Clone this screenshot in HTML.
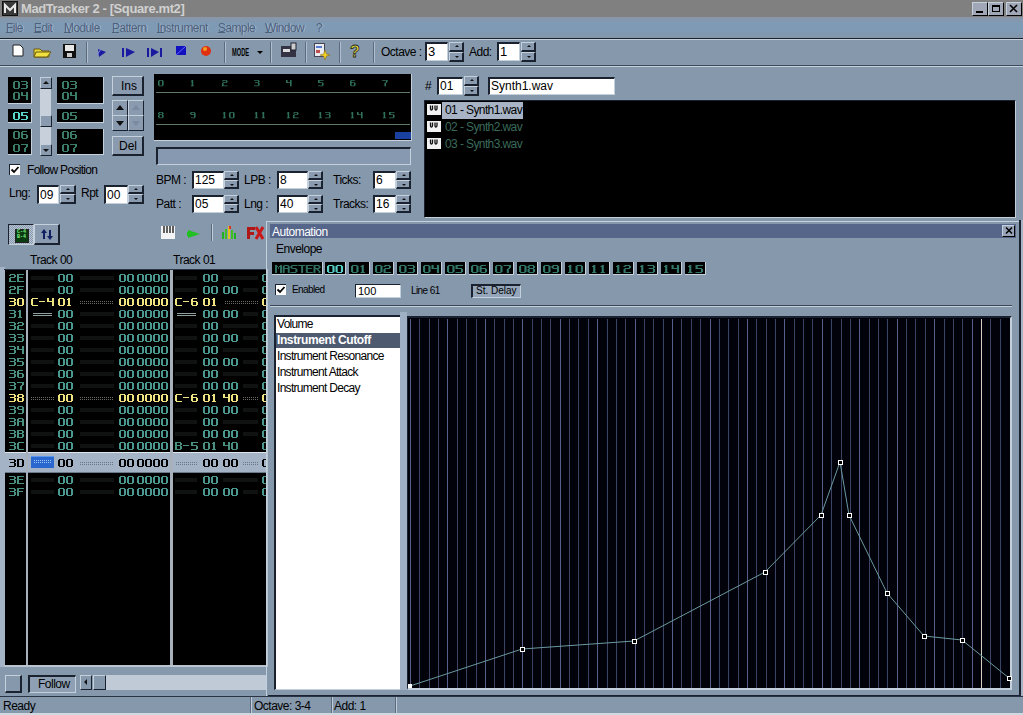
<!DOCTYPE html>
<html><head><meta charset="utf-8"><style>
html,body{margin:0;padding:0;width:1023px;height:715px;overflow:hidden;background:#8698ac;font-family:"Liberation Sans",sans-serif}
.a{position:absolute}
.t{position:absolute;white-space:pre;font-family:"Liberation Sans",sans-serif}
</style></head><body>
<svg width="0" height="0" style="position:absolute"><defs><path id="g0" d="M1 0h5v1h-5zM0 1h2v1h-2zM5 1h2v1h-2zM0 2h2v1h-2zM5 2h2v1h-2zM0 3h2v1h-2zM5 3h2v1h-2zM0 4h2v1h-2zM5 4h2v1h-2zM0 5h2v1h-2zM5 5h2v1h-2zM0 6h2v1h-2zM5 6h2v1h-2zM1 7h5v1h-5z"/><path id="g1" d="M2 0h2v1h-2zM1 1h3v1h-3zM2 2h2v1h-2zM2 3h2v1h-2zM2 4h2v1h-2zM2 5h2v1h-2zM2 6h2v1h-2zM1 7h4v1h-4z"/><path id="g2" d="M1 0h5v1h-5zM0 1h2v1h-2zM5 1h2v1h-2zM5 2h2v1h-2zM1 3h5v1h-5zM0 4h2v1h-2zM0 5h2v1h-2zM0 6h2v1h-2zM0 7h7v1h-7z"/><path id="g3" d="M0 0h6v1h-6zM5 1h2v1h-2zM5 2h2v1h-2zM1 3h5v1h-5zM5 4h2v1h-2zM5 5h2v1h-2zM5 6h2v1h-2zM0 7h6v1h-6z"/><path id="g4" d="M0 0h2v1h-2zM5 0h2v1h-2zM0 1h2v1h-2zM5 1h2v1h-2zM0 2h2v1h-2zM5 2h2v1h-2zM0 3h7v1h-7zM5 4h2v1h-2zM5 5h2v1h-2zM5 6h2v1h-2zM5 7h2v1h-2z"/><path id="g5" d="M0 0h7v1h-7zM0 1h2v1h-2zM0 2h2v1h-2zM0 3h6v1h-6zM5 4h2v1h-2zM5 5h2v1h-2zM5 6h2v1h-2zM0 7h6v1h-6z"/><path id="g6" d="M1 0h5v1h-5zM0 1h2v1h-2zM0 2h2v1h-2zM0 3h6v1h-6zM0 4h2v1h-2zM5 4h2v1h-2zM0 5h2v1h-2zM5 5h2v1h-2zM0 6h2v1h-2zM5 6h2v1h-2zM1 7h5v1h-5z"/><path id="g7" d="M0 0h7v1h-7zM5 1h2v1h-2zM5 2h2v1h-2zM4 3h2v1h-2zM3 4h2v1h-2zM3 5h2v1h-2zM3 6h2v1h-2zM3 7h2v1h-2z"/><path id="g8" d="M1 0h5v1h-5zM0 1h2v1h-2zM5 1h2v1h-2zM0 2h2v1h-2zM5 2h2v1h-2zM1 3h5v1h-5zM0 4h2v1h-2zM5 4h2v1h-2zM0 5h2v1h-2zM5 5h2v1h-2zM0 6h2v1h-2zM5 6h2v1h-2zM1 7h5v1h-5z"/><path id="g9" d="M1 0h5v1h-5zM0 1h2v1h-2zM5 1h2v1h-2zM0 2h2v1h-2zM5 2h2v1h-2zM1 3h6v1h-6zM5 4h2v1h-2zM5 5h2v1h-2zM5 6h2v1h-2zM1 7h5v1h-5z"/><path id="gA" d="M1 0h5v1h-5zM0 1h2v1h-2zM5 1h2v1h-2zM0 2h2v1h-2zM5 2h2v1h-2zM0 3h7v1h-7zM0 4h2v1h-2zM5 4h2v1h-2zM0 5h2v1h-2zM5 5h2v1h-2zM0 6h2v1h-2zM5 6h2v1h-2zM0 7h2v1h-2zM5 7h2v1h-2z"/><path id="gB" d="M0 0h6v1h-6zM0 1h2v1h-2zM5 1h2v1h-2zM0 2h2v1h-2zM5 2h2v1h-2zM0 3h6v1h-6zM0 4h2v1h-2zM5 4h2v1h-2zM0 5h2v1h-2zM5 5h2v1h-2zM0 6h2v1h-2zM5 6h2v1h-2zM0 7h6v1h-6z"/><path id="gC" d="M1 0h6v1h-6zM0 1h2v1h-2zM0 2h2v1h-2zM0 3h2v1h-2zM0 4h2v1h-2zM0 5h2v1h-2zM0 6h2v1h-2zM1 7h6v1h-6z"/><path id="gD" d="M0 0h6v1h-6zM0 1h2v1h-2zM5 1h2v1h-2zM0 2h2v1h-2zM5 2h2v1h-2zM0 3h2v1h-2zM5 3h2v1h-2zM0 4h2v1h-2zM5 4h2v1h-2zM0 5h2v1h-2zM5 5h2v1h-2zM0 6h2v1h-2zM5 6h2v1h-2zM0 7h6v1h-6z"/><path id="gE" d="M0 0h7v1h-7zM0 1h2v1h-2zM0 2h2v1h-2zM0 3h6v1h-6zM0 4h2v1h-2zM0 5h2v1h-2zM0 6h2v1h-2zM0 7h7v1h-7z"/><path id="gF" d="M0 0h7v1h-7zM0 1h2v1h-2zM0 2h2v1h-2zM0 3h6v1h-6zM0 4h2v1h-2zM0 5h2v1h-2zM0 6h2v1h-2zM0 7h2v1h-2z"/><path id="gdash" d="M0 3h6v1h-6z"/><path id="gM" d="M0 0h2v1h-2zM5 0h2v1h-2zM0 1h3v1h-3zM4 1h3v1h-3zM0 2h2v1h-2zM3 2h1v1h-1zM5 2h2v1h-2zM0 3h2v1h-2zM3 3h1v1h-1zM5 3h2v1h-2zM0 4h2v1h-2zM5 4h2v1h-2zM0 5h2v1h-2zM5 5h2v1h-2zM0 6h2v1h-2zM5 6h2v1h-2zM0 7h2v1h-2zM5 7h2v1h-2z"/><path id="gS" d="M1 0h6v1h-6zM0 1h2v1h-2zM0 2h2v1h-2zM1 3h5v1h-5zM5 4h2v1h-2zM5 5h2v1h-2zM5 6h2v1h-2zM0 7h6v1h-6z"/><path id="gT" d="M0 0h7v1h-7zM3 1h2v1h-2zM3 2h2v1h-2zM3 3h2v1h-2zM3 4h2v1h-2zM3 5h2v1h-2zM3 6h2v1h-2zM3 7h2v1h-2z"/><path id="gR" d="M0 0h6v1h-6zM0 1h2v1h-2zM5 1h2v1h-2zM0 2h2v1h-2zM5 2h2v1h-2zM0 3h6v1h-6zM0 4h2v1h-2zM3 4h2v1h-2zM0 5h2v1h-2zM4 5h2v1h-2zM0 6h2v1h-2zM5 6h2v1h-2zM0 7h2v1h-2zM5 7h2v1h-2z"/></defs></svg>
<div class="a" style="left:0px;top:0px;width:1023px;height:17px;background:#808080"></div>
<div class="a" style="left:2px;top:1px;width:16px;height:15px;background:#3a3a3a;border:1px solid #111;box-sizing:border-box"><svg width="14" height="13" style="position:absolute;left:0;top:0"><path d="M2 11 L2 3 L7 8 L12 3 L12 11" stroke="#e8e8e8" stroke-width="2" fill="none"/></svg></div>
<div class="t" style="left:21px;top:1px;font-size:13px;font-weight:bold;color:#d0d0d0;line-height:15px;letter-spacing:-0.4px">MadTracker 2 - [Square.mt2]</div>
<div class="a" style="left:972px;top:2px;width:16px;height:14px;background:#a0a8b8;box-sizing:border-box;border-top:1px solid #c4d0dc;border-left:1px solid #c4d0dc;border-bottom:1px solid #1a2230;border-right:1px solid #1a2230;border-bottom:1px solid #000;border-right:1px solid #000"></div>
<div class="a" style="left:988px;top:2px;width:16px;height:14px;background:#a0a8b8;box-sizing:border-box;border-top:1px solid #c4d0dc;border-left:1px solid #c4d0dc;border-bottom:1px solid #1a2230;border-right:1px solid #1a2230;border-bottom:1px solid #000;border-right:1px solid #000"></div>
<div class="a" style="left:1006px;top:2px;width:16px;height:14px;background:#a0a8b8;box-sizing:border-box;border-top:1px solid #c4d0dc;border-left:1px solid #c4d0dc;border-bottom:1px solid #1a2230;border-right:1px solid #1a2230;border-bottom:1px solid #000;border-right:1px solid #000"></div>
<div class="a" style="left:976px;top:11px;width:7px;height:2px;background:#000"></div>
<div class="a" style="left:992px;top:5px;width:8px;height:7px;border:1px solid #000;border-top:2px solid #000;box-sizing:border-box"></div>
<svg class="a" style="left:1009px;top:4px" width="10" height="10"><path d="M1 1 L8 8 M8 1 L1 8" stroke="#000" stroke-width="1.6"/></svg>
<div class="a" style="left:0px;top:17px;width:1023px;height:21px;background:linear-gradient(#8a96a6 0px,#8498ae 3px,#7e9ab4 6px,#7e9ab4 14px,#8496aa 21px)"></div>
<div class="t" style="left:7px;top:21px;font-size:12px;color:#a8bcd0;letter-spacing:-0.6px;line-height:14px">File</div>
<div class="t" style="left:6px;top:21px;font-size:12px;color:#4e607c;letter-spacing:-0.6px;line-height:14px">File</div>
<div class="a" style="left:6px;top:32px;width:7px;height:1px;background:#4e607c"></div>
<div class="t" style="left:35px;top:21px;font-size:12px;color:#a8bcd0;letter-spacing:-0.6px;line-height:14px">Edit</div>
<div class="t" style="left:34px;top:21px;font-size:12px;color:#4e607c;letter-spacing:-0.6px;line-height:14px">Edit</div>
<div class="a" style="left:34px;top:32px;width:7px;height:1px;background:#4e607c"></div>
<div class="t" style="left:65px;top:21px;font-size:12px;color:#a8bcd0;letter-spacing:-0.6px;line-height:14px">Module</div>
<div class="t" style="left:64px;top:21px;font-size:12px;color:#4e607c;letter-spacing:-0.6px;line-height:14px">Module</div>
<div class="a" style="left:64px;top:32px;width:7px;height:1px;background:#4e607c"></div>
<div class="t" style="left:113px;top:21px;font-size:12px;color:#a8bcd0;letter-spacing:-0.6px;line-height:14px">Pattern</div>
<div class="t" style="left:112px;top:21px;font-size:12px;color:#4e607c;letter-spacing:-0.6px;line-height:14px">Pattern</div>
<div class="a" style="left:112px;top:32px;width:7px;height:1px;background:#4e607c"></div>
<div class="t" style="left:158px;top:21px;font-size:12px;color:#a8bcd0;letter-spacing:-0.6px;line-height:14px">Instrument</div>
<div class="t" style="left:157px;top:21px;font-size:12px;color:#4e607c;letter-spacing:-0.6px;line-height:14px">Instrument</div>
<div class="a" style="left:157px;top:32px;width:7px;height:1px;background:#4e607c"></div>
<div class="t" style="left:219px;top:21px;font-size:12px;color:#a8bcd0;letter-spacing:-0.6px;line-height:14px">Sample</div>
<div class="t" style="left:218px;top:21px;font-size:12px;color:#4e607c;letter-spacing:-0.6px;line-height:14px">Sample</div>
<div class="a" style="left:218px;top:32px;width:7px;height:1px;background:#4e607c"></div>
<div class="t" style="left:266px;top:21px;font-size:12px;color:#a8bcd0;letter-spacing:-0.6px;line-height:14px">Window</div>
<div class="t" style="left:265px;top:21px;font-size:12px;color:#4e607c;letter-spacing:-0.6px;line-height:14px">Window</div>
<div class="a" style="left:265px;top:32px;width:7px;height:1px;background:#4e607c"></div>
<div class="t" style="left:317px;top:21px;font-size:12px;color:#a8bcd0;letter-spacing:-0.6px;line-height:14px">?</div>
<div class="t" style="left:316px;top:21px;font-size:12px;color:#4e607c;letter-spacing:-0.6px;line-height:14px">?</div>
<div class="a" style="left:0px;top:38px;width:1023px;height:1px;background:#1a2230"></div>
<div class="a" style="left:0px;top:39px;width:1023px;height:1px;background:#c4d0dc"></div>
<div class="a" style="left:0px;top:40px;width:1023px;height:25px;background:#8698ac"></div>
<div class="a" style="left:0px;top:65px;width:1023px;height:1px;background:#3c4a5c"></div>
<div class="a" style="left:0px;top:66px;width:1023px;height:1px;background:#c4d0dc"></div>
<div class="a" style="left:86px;top:42px;width:1px;height:21px;background:#5a6a80"></div>
<div class="a" style="left:87px;top:42px;width:1px;height:21px;background:#b0bece"></div>
<div class="a" style="left:224px;top:42px;width:1px;height:21px;background:#5a6a80"></div>
<div class="a" style="left:225px;top:42px;width:1px;height:21px;background:#b0bece"></div>
<div class="a" style="left:270px;top:42px;width:1px;height:21px;background:#5a6a80"></div>
<div class="a" style="left:271px;top:42px;width:1px;height:21px;background:#b0bece"></div>
<div class="a" style="left:305px;top:42px;width:1px;height:21px;background:#5a6a80"></div>
<div class="a" style="left:306px;top:42px;width:1px;height:21px;background:#b0bece"></div>
<div class="a" style="left:339px;top:42px;width:1px;height:21px;background:#5a6a80"></div>
<div class="a" style="left:340px;top:42px;width:1px;height:21px;background:#b0bece"></div>
<div class="a" style="left:373px;top:42px;width:1px;height:21px;background:#5a6a80"></div>
<div class="a" style="left:374px;top:42px;width:1px;height:21px;background:#b0bece"></div>
<svg class="a" style="left:0;top:40px" width="380" height="25">
<path d="M13 5 H20 L23 8 V16 H13 Z" fill="#fff" stroke="#222" stroke-width="1"/>
<path d="M34 9 H40 L42 11 H49 V17 H34 Z" fill="#e8d838" stroke="#6a5a10" stroke-width="1"/>
<path d="M36 12 H51 L47 17 H34 Z" fill="#f0e040" stroke="#6a5a10" stroke-width="1"/>
<rect x="63" y="4" width="13" height="14" fill="#111"/><rect x="65" y="5" width="9" height="6" fill="#e8e8e8"/><rect x="67" y="13" width="5" height="4" fill="#ccc"/>
<path d="M98 9 L106 12 L99 17 Z" fill="#1a1aa0"/><path d="M97 15 L101 9" stroke="#8a8ae0" stroke-width="1"/>
<rect x="122" y="8" width="2" height="9" fill="#1a1aa0"/><path d="M126 8 L135 12 L126 17 Z" fill="#1a1aa0"/>
<rect x="147" y="8" width="2" height="9" fill="#1a1aa0"/><path d="M151 8 L159 12 L151 17 Z" fill="#1a1aa0"/><rect x="160" y="8" width="2" height="9" fill="#1a1aa0"/>
<path d="M176 6 H186 V15 H176 Z" fill="#1010c0"/><path d="M176 15 L186 6" stroke="#6a6af0" stroke-width="1"/>
<circle cx="206" cy="11" r="5" fill="#e03010"/><circle cx="205" cy="9" r="2" fill="#f0a020"/>
<text x="232" y="16" font-family="Liberation Sans" font-weight="bold" font-size="10" fill="#000" textLength="17" lengthAdjust="spacingAndGlyphs">MODE</text>
<path d="M257 11 H263 L260 14 Z" fill="#000"/>
<rect x="281" y="6" width="15" height="11" fill="#334" /><rect x="283" y="9" width="7" height="3" fill="#ddd"/><rect x="291" y="3" width="5" height="7" fill="#ccc" stroke="#223" stroke-width="1"/>
<rect x="314.5" y="3.5" width="10" height="13" fill="#e8ecf0" stroke="#445" stroke-width="1"/><rect x="316" y="6" width="6" height="2" fill="#5a7ad0"/><rect x="316" y="10" width="4" height="3" fill="#c05050"/><path d="M325 10 L326.5 14 L330 15 L326.5 16 L325 20 L323.5 16 L320 15 L323.5 14 Z" fill="#f0d020" stroke="#806010" stroke-width="0.5"/>
<text x="350" y="17" font-family="Liberation Sans" font-weight="bold" font-size="16" fill="#f0e838" stroke="#222" stroke-width="0.8">?</text>
</svg>
<div class="t" style="left:381px;top:45px;font-size:12px;color:#000;letter-spacing:-0.5px;line-height:14px">Octave :</div>
<div class="a" style="left:425px;top:42px;width:23px;height:19px;background:#fff;box-sizing:border-box;border-top:2px solid #1a2230;border-left:2px solid #1a2230;border-bottom:1px solid #c4d0dc;border-right:1px solid #c4d0dc;"></div>
<div class="t" style="left:428px;top:44.5px;font-size:13px;color:#000;line-height:14px;">3</div>
<div class="a" style="left:449px;top:42px;width:15px;height:10px;background:#8a9bb0;box-sizing:border-box;border-top:1px solid #c4d0dc;border-left:1px solid #c4d0dc;border-bottom:1px solid #1a2230;border-right:1px solid #1a2230;border-bottom:2px solid #1a2230;border-right:2px solid #1a2230;"></div>
<div class="a" style="left:449px;top:52px;width:15px;height:10px;background:#8a9bb0;box-sizing:border-box;border-top:1px solid #c4d0dc;border-left:1px solid #c4d0dc;border-bottom:1px solid #1a2230;border-right:1px solid #1a2230;border-bottom:2px solid #1a2230;border-right:2px solid #1a2230;"></div>
<div class="a" style="left:454.5px;top:45.0px;width:0;height:0;border-left:2px solid transparent;border-right:2px solid transparent;border-bottom:2px solid #111"></div>
<div class="a" style="left:454.5px;top:56.0px;width:0;height:0;border-left:2px solid transparent;border-right:2px solid transparent;border-top:2px solid #111"></div>
<div class="t" style="left:469px;top:45px;font-size:12px;color:#000;letter-spacing:-0.5px;line-height:14px">Add:</div>
<div class="a" style="left:497px;top:42px;width:23px;height:19px;background:#fff;box-sizing:border-box;border-top:2px solid #1a2230;border-left:2px solid #1a2230;border-bottom:1px solid #c4d0dc;border-right:1px solid #c4d0dc;"></div>
<div class="t" style="left:500px;top:44.5px;font-size:13px;color:#000;line-height:14px;">1</div>
<div class="a" style="left:521px;top:42px;width:15px;height:10px;background:#8a9bb0;box-sizing:border-box;border-top:1px solid #c4d0dc;border-left:1px solid #c4d0dc;border-bottom:1px solid #1a2230;border-right:1px solid #1a2230;border-bottom:2px solid #1a2230;border-right:2px solid #1a2230;"></div>
<div class="a" style="left:521px;top:52px;width:15px;height:10px;background:#8a9bb0;box-sizing:border-box;border-top:1px solid #c4d0dc;border-left:1px solid #c4d0dc;border-bottom:1px solid #1a2230;border-right:1px solid #1a2230;border-bottom:2px solid #1a2230;border-right:2px solid #1a2230;"></div>
<div class="a" style="left:526.5px;top:45.0px;width:0;height:0;border-left:2px solid transparent;border-right:2px solid transparent;border-bottom:2px solid #111"></div>
<div class="a" style="left:526.5px;top:56.0px;width:0;height:0;border-left:2px solid transparent;border-right:2px solid transparent;border-top:2px solid #111"></div>
<div class="a" style="left:0px;top:67px;width:1023px;height:155px;background:#8698ac"></div>
<div class="a" style="left:8px;top:77px;width:24px;height:27px;background:#000;box-sizing:border-box;border-bottom:1px solid #c4d0dc;border-right:1px solid #c4d0dc;"></div>
<svg class="a" style="left:8px;top:77px" width="23" height="26"><use href="#g0" x="5" y="4" fill="#3a7c68"/><use href="#g3" x="13" y="4" fill="#3a7c68"/><use href="#g0" x="5" y="15" fill="#3a7c68"/><use href="#g4" x="13" y="15" fill="#3a7c68"/></svg>
<div class="a" style="left:8px;top:109px;width:24px;height:14px;background:#000;box-sizing:border-box;border-bottom:1px solid #c4d0dc;border-right:1px solid #c4d0dc;"></div>
<svg class="a" style="left:8px;top:109px" width="23" height="13"><use href="#g0" x="5" y="3" fill="#58d8c8"/><use href="#g5" x="13" y="3" fill="#58d8c8"/></svg>
<div class="a" style="left:8px;top:129px;width:24px;height:26px;background:#000;box-sizing:border-box;border-bottom:1px solid #c4d0dc;border-right:1px solid #c4d0dc;"></div>
<svg class="a" style="left:8px;top:129px" width="23" height="25"><use href="#g0" x="5" y="2" fill="#3a7c68"/><use href="#g6" x="13" y="2" fill="#3a7c68"/><use href="#g0" x="5" y="15" fill="#3a7c68"/><use href="#g7" x="13" y="15" fill="#3a7c68"/></svg>
<div class="a" style="left:57px;top:77px;width:47px;height:27px;background:#000;box-sizing:border-box;border-bottom:1px solid #c4d0dc;border-right:1px solid #c4d0dc;"></div>
<svg class="a" style="left:57px;top:77px" width="46" height="26"><use href="#g0" x="5" y="4" fill="#3a7c68"/><use href="#g3" x="13" y="4" fill="#3a7c68"/><use href="#g0" x="5" y="15" fill="#3a7c68"/><use href="#g4" x="13" y="15" fill="#3a7c68"/></svg>
<div class="a" style="left:57px;top:109px;width:47px;height:14px;background:#000;box-sizing:border-box;border-bottom:1px solid #c4d0dc;border-right:1px solid #c4d0dc;"></div>
<svg class="a" style="left:57px;top:109px" width="46" height="13"><use href="#g0" x="5" y="3" fill="#3a7c68"/><use href="#g5" x="13" y="3" fill="#3a7c68"/></svg>
<div class="a" style="left:57px;top:129px;width:47px;height:26px;background:#000;box-sizing:border-box;border-bottom:1px solid #c4d0dc;border-right:1px solid #c4d0dc;"></div>
<svg class="a" style="left:57px;top:129px" width="46" height="25"><use href="#g0" x="5" y="2" fill="#3a7c68"/><use href="#g6" x="13" y="2" fill="#3a7c68"/><use href="#g0" x="5" y="15" fill="#3a7c68"/><use href="#g7" x="13" y="15" fill="#3a7c68"/></svg>
<div class="a" style="left:40px;top:77px;width:11px;height:78px;background:#c8d0dc"></div>
<div class="a" style="left:40px;top:77px;width:12px;height:12px;background:#8a9bb0;box-sizing:border-box;border-top:1px solid #c4d0dc;border-left:1px solid #c4d0dc;border-bottom:1px solid #1a2230;border-right:1px solid #1a2230;"></div>
<div class="a" style="left:40px;top:115px;width:12px;height:12px;background:#8a9bb0;box-sizing:border-box;border-top:1px solid #c4d0dc;border-left:1px solid #c4d0dc;border-bottom:1px solid #1a2230;border-right:1px solid #1a2230;"></div>
<div class="a" style="left:40px;top:144px;width:12px;height:12px;background:#8a9bb0;box-sizing:border-box;border-top:1px solid #c4d0dc;border-left:1px solid #c4d0dc;border-bottom:1px solid #1a2230;border-right:1px solid #1a2230;"></div>
<div class="a" style="left:43px;top:81px;width:0;height:0;border-left:3px solid transparent;border-right:3px solid transparent;border-bottom:3px solid #111"></div>
<div class="a" style="left:43px;top:149px;width:0;height:0;border-left:3px solid transparent;border-right:3px solid transparent;border-top:3px solid #111"></div>
<div class="a" style="left:112px;top:76px;width:32px;height:20px;background:#8a9bb0;box-sizing:border-box;border-top:1px solid #c4d0dc;border-left:1px solid #c4d0dc;border-bottom:1px solid #1a2230;border-right:1px solid #1a2230;border-bottom:2px solid #1a2230;border-right:2px solid #1a2230"></div>
<div class="t" style="left:121px;top:79px;font-size:12px;color:#000;line-height:14px">Ins</div>
<div class="a" style="left:112px;top:136px;width:32px;height:20px;background:#8a9bb0;box-sizing:border-box;border-top:1px solid #c4d0dc;border-left:1px solid #c4d0dc;border-bottom:1px solid #1a2230;border-right:1px solid #1a2230;border-bottom:2px solid #1a2230;border-right:2px solid #1a2230"></div>
<div class="t" style="left:119px;top:139px;font-size:12px;color:#000;line-height:14px">Del</div>
<div class="a" style="left:112px;top:100px;width:16px;height:16px;background:#8a9bb0;box-sizing:border-box;border-top:1px solid #c4d0dc;border-left:1px solid #c4d0dc;border-bottom:1px solid #1a2230;border-right:1px solid #1a2230;"></div>
<div class="a" style="left:116px;top:105px;width:0;height:0;border-left:4px solid transparent;border-right:4px solid transparent;border-bottom:5px solid #111"></div>
<div class="a" style="left:128px;top:100px;width:16px;height:16px;background:#8a9bb0;box-sizing:border-box;border-top:1px solid #c4d0dc;border-left:1px solid #c4d0dc;border-bottom:1px solid #1a2230;border-right:1px solid #1a2230;"></div>
<div class="a" style="left:132px;top:105px;width:0;height:0;border-left:4px solid transparent;border-right:4px solid transparent;border-bottom:5px solid #7a8aa0"></div>
<div class="a" style="left:112px;top:115px;width:16px;height:16px;background:#8a9bb0;box-sizing:border-box;border-top:1px solid #c4d0dc;border-left:1px solid #c4d0dc;border-bottom:1px solid #1a2230;border-right:1px solid #1a2230;"></div>
<div class="a" style="left:116px;top:121px;width:0;height:0;border-left:4px solid transparent;border-right:4px solid transparent;border-top:5px solid #111"></div>
<div class="a" style="left:128px;top:115px;width:16px;height:16px;background:#8a9bb0;box-sizing:border-box;border-top:1px solid #c4d0dc;border-left:1px solid #c4d0dc;border-bottom:1px solid #1a2230;border-right:1px solid #1a2230;"></div>
<div class="a" style="left:132px;top:121px;width:0;height:0;border-left:4px solid transparent;border-right:4px solid transparent;border-top:5px solid #7a8aa0"></div>
<div class="a" style="left:9px;top:164px;width:11px;height:11px;background:#fff;box-sizing:border-box;border-top:1px solid #1a2230;border-left:1px solid #1a2230"></div>
<svg class="a" style="left:10px;top:165px" width="10" height="10"><path d="M1.5 4.5 L4 7 L8.5 2" stroke="#000" stroke-width="1.8" fill="none"/></svg>
<div class="t" style="left:27px;top:163px;font-size:12px;color:#000;letter-spacing:-0.7px;line-height:14px">Follow Position</div>
<div class="t" style="left:9px;top:186px;font-size:12px;color:#000;letter-spacing:-0.5px;line-height:14px">Lng:</div>
<div class="a" style="left:37px;top:185px;width:22px;height:19px;background:#fff;box-sizing:border-box;border-top:2px solid #1a2230;border-left:2px solid #1a2230;border-bottom:1px solid #c4d0dc;border-right:1px solid #c4d0dc;"></div>
<div class="t" style="left:40px;top:187.5px;font-size:12px;color:#000;line-height:14px;">09</div>
<div class="a" style="left:60px;top:185px;width:16px;height:9px;background:#8a9bb0;box-sizing:border-box;border-top:1px solid #c4d0dc;border-left:1px solid #c4d0dc;border-bottom:1px solid #1a2230;border-right:1px solid #1a2230;border-bottom:2px solid #1a2230;border-right:2px solid #1a2230;"></div>
<div class="a" style="left:60px;top:194px;width:16px;height:10px;background:#8a9bb0;box-sizing:border-box;border-top:1px solid #c4d0dc;border-left:1px solid #c4d0dc;border-bottom:1px solid #1a2230;border-right:1px solid #1a2230;border-bottom:2px solid #1a2230;border-right:2px solid #1a2230;"></div>
<div class="a" style="left:66.0px;top:187.5px;width:0;height:0;border-left:2px solid transparent;border-right:2px solid transparent;border-bottom:2px solid #111"></div>
<div class="a" style="left:66.0px;top:198.0px;width:0;height:0;border-left:2px solid transparent;border-right:2px solid transparent;border-top:2px solid #111"></div>
<div class="t" style="left:81px;top:186px;font-size:12px;color:#000;letter-spacing:-0.5px;line-height:14px">Rpt</div>
<div class="a" style="left:104px;top:185px;width:24px;height:19px;background:#fff;box-sizing:border-box;border-top:2px solid #1a2230;border-left:2px solid #1a2230;border-bottom:1px solid #c4d0dc;border-right:1px solid #c4d0dc;"></div>
<div class="t" style="left:107px;top:187.5px;font-size:12px;color:#000;line-height:14px;">00</div>
<div class="a" style="left:128px;top:185px;width:16px;height:9px;background:#8a9bb0;box-sizing:border-box;border-top:1px solid #c4d0dc;border-left:1px solid #c4d0dc;border-bottom:1px solid #1a2230;border-right:1px solid #1a2230;border-bottom:2px solid #1a2230;border-right:2px solid #1a2230;"></div>
<div class="a" style="left:128px;top:194px;width:16px;height:10px;background:#8a9bb0;box-sizing:border-box;border-top:1px solid #c4d0dc;border-left:1px solid #c4d0dc;border-bottom:1px solid #1a2230;border-right:1px solid #1a2230;border-bottom:2px solid #1a2230;border-right:2px solid #1a2230;"></div>
<div class="a" style="left:134.0px;top:187.5px;width:0;height:0;border-left:2px solid transparent;border-right:2px solid transparent;border-bottom:2px solid #111"></div>
<div class="a" style="left:134.0px;top:198.0px;width:0;height:0;border-left:2px solid transparent;border-right:2px solid transparent;border-top:2px solid #111"></div>
<div class="a" style="left:154px;top:74px;width:258px;height:67px;background:#000;box-sizing:border-box;border-bottom:1px solid #c4d0dc;border-right:1px solid #c4d0dc"></div>
<div class="a" style="left:156px;top:92px;width:254px;height:1px;background:#607a6a"></div>
<div class="a" style="left:156px;top:124px;width:254px;height:1px;background:#607a6a"></div>
<svg class="a" style="left:154px;top:74px" width="257" height="66"><use href="#g0" transform="translate(4 6) scale(0.8 0.78)" fill="#2f7058"/><use href="#g8" transform="translate(4 38) scale(0.8 0.78)" fill="#2f7058"/><use href="#g1" transform="translate(36 6) scale(0.8 0.78)" fill="#2f7058"/><use href="#g9" transform="translate(36 38) scale(0.8 0.78)" fill="#2f7058"/><use href="#g2" transform="translate(68 6) scale(0.8 0.78)" fill="#2f7058"/><use href="#g1" transform="translate(68 38) scale(0.8 0.78)" fill="#2f7058"/><use href="#g0" transform="translate(75 38) scale(0.8 0.78)" fill="#2f7058"/><use href="#g3" transform="translate(100 6) scale(0.8 0.78)" fill="#2f7058"/><use href="#g1" transform="translate(100 38) scale(0.8 0.78)" fill="#2f7058"/><use href="#g1" transform="translate(107 38) scale(0.8 0.78)" fill="#2f7058"/><use href="#g4" transform="translate(132 6) scale(0.8 0.78)" fill="#2f7058"/><use href="#g1" transform="translate(132 38) scale(0.8 0.78)" fill="#2f7058"/><use href="#g2" transform="translate(139 38) scale(0.8 0.78)" fill="#2f7058"/><use href="#g5" transform="translate(164 6) scale(0.8 0.78)" fill="#2f7058"/><use href="#g1" transform="translate(164 38) scale(0.8 0.78)" fill="#2f7058"/><use href="#g3" transform="translate(171 38) scale(0.8 0.78)" fill="#2f7058"/><use href="#g6" transform="translate(196 6) scale(0.8 0.78)" fill="#2f7058"/><use href="#g1" transform="translate(196 38) scale(0.8 0.78)" fill="#2f7058"/><use href="#g4" transform="translate(203 38) scale(0.8 0.78)" fill="#2f7058"/><use href="#g7" transform="translate(228 6) scale(0.8 0.78)" fill="#2f7058"/><use href="#g1" transform="translate(228 38) scale(0.8 0.78)" fill="#2f7058"/><use href="#g5" transform="translate(235 38) scale(0.8 0.78)" fill="#2f7058"/></svg>
<div class="a" style="left:395px;top:132px;width:16px;height:7px;background:#1a40a0"></div>
<div class="a" style="left:156px;top:147px;width:255px;height:18px;background:#8799b0;box-sizing:border-box;border-top:1px solid #1a2230;border-left:1px solid #1a2230;border-bottom:1px solid #c4d0dc;border-right:1px solid #c4d0dc;border-top:2px solid #1a2230;border-left:2px solid #1a2230"></div>
<div class="t" style="left:156px;top:173px;font-size:12px;color:#000;letter-spacing:-0.5px;line-height:14px">BPM :</div>
<div class="a" style="left:192px;top:171px;width:32px;height:18px;background:#fff;box-sizing:border-box;border-top:2px solid #1a2230;border-left:2px solid #1a2230;border-bottom:1px solid #c4d0dc;border-right:1px solid #c4d0dc;"></div>
<div class="t" style="left:195px;top:173.0px;font-size:12px;color:#000;line-height:14px;">125</div>
<div class="a" style="left:224px;top:171px;width:15px;height:9px;background:#8a9bb0;box-sizing:border-box;border-top:1px solid #c4d0dc;border-left:1px solid #c4d0dc;border-bottom:1px solid #1a2230;border-right:1px solid #1a2230;border-bottom:2px solid #1a2230;border-right:2px solid #1a2230;"></div>
<div class="a" style="left:224px;top:180px;width:15px;height:9px;background:#8a9bb0;box-sizing:border-box;border-top:1px solid #c4d0dc;border-left:1px solid #c4d0dc;border-bottom:1px solid #1a2230;border-right:1px solid #1a2230;border-bottom:2px solid #1a2230;border-right:2px solid #1a2230;"></div>
<div class="a" style="left:229.5px;top:173.5px;width:0;height:0;border-left:2px solid transparent;border-right:2px solid transparent;border-bottom:2px solid #111"></div>
<div class="a" style="left:229.5px;top:183.5px;width:0;height:0;border-left:2px solid transparent;border-right:2px solid transparent;border-top:2px solid #111"></div>
<div class="t" style="left:156px;top:197px;font-size:12px;color:#000;letter-spacing:-0.5px;line-height:14px">Patt :</div>
<div class="a" style="left:192px;top:195px;width:32px;height:18px;background:#fff;box-sizing:border-box;border-top:2px solid #1a2230;border-left:2px solid #1a2230;border-bottom:1px solid #c4d0dc;border-right:1px solid #c4d0dc;"></div>
<div class="t" style="left:195px;top:197.0px;font-size:12px;color:#000;line-height:14px;">05</div>
<div class="a" style="left:224px;top:195px;width:15px;height:9px;background:#8a9bb0;box-sizing:border-box;border-top:1px solid #c4d0dc;border-left:1px solid #c4d0dc;border-bottom:1px solid #1a2230;border-right:1px solid #1a2230;border-bottom:2px solid #1a2230;border-right:2px solid #1a2230;"></div>
<div class="a" style="left:224px;top:204px;width:15px;height:9px;background:#8a9bb0;box-sizing:border-box;border-top:1px solid #c4d0dc;border-left:1px solid #c4d0dc;border-bottom:1px solid #1a2230;border-right:1px solid #1a2230;border-bottom:2px solid #1a2230;border-right:2px solid #1a2230;"></div>
<div class="a" style="left:229.5px;top:197.5px;width:0;height:0;border-left:2px solid transparent;border-right:2px solid transparent;border-bottom:2px solid #111"></div>
<div class="a" style="left:229.5px;top:207.5px;width:0;height:0;border-left:2px solid transparent;border-right:2px solid transparent;border-top:2px solid #111"></div>
<div class="t" style="left:244px;top:173px;font-size:12px;color:#000;letter-spacing:-0.5px;line-height:14px">LPB :</div>
<div class="a" style="left:277px;top:171px;width:31px;height:18px;background:#fff;box-sizing:border-box;border-top:2px solid #1a2230;border-left:2px solid #1a2230;border-bottom:1px solid #c4d0dc;border-right:1px solid #c4d0dc;"></div>
<div class="t" style="left:280px;top:173.0px;font-size:12px;color:#000;line-height:14px;">8</div>
<div class="a" style="left:308px;top:171px;width:15px;height:9px;background:#8a9bb0;box-sizing:border-box;border-top:1px solid #c4d0dc;border-left:1px solid #c4d0dc;border-bottom:1px solid #1a2230;border-right:1px solid #1a2230;border-bottom:2px solid #1a2230;border-right:2px solid #1a2230;"></div>
<div class="a" style="left:308px;top:180px;width:15px;height:9px;background:#8a9bb0;box-sizing:border-box;border-top:1px solid #c4d0dc;border-left:1px solid #c4d0dc;border-bottom:1px solid #1a2230;border-right:1px solid #1a2230;border-bottom:2px solid #1a2230;border-right:2px solid #1a2230;"></div>
<div class="a" style="left:313.5px;top:173.5px;width:0;height:0;border-left:2px solid transparent;border-right:2px solid transparent;border-bottom:2px solid #111"></div>
<div class="a" style="left:313.5px;top:183.5px;width:0;height:0;border-left:2px solid transparent;border-right:2px solid transparent;border-top:2px solid #111"></div>
<div class="t" style="left:244px;top:197px;font-size:12px;color:#000;letter-spacing:-0.5px;line-height:14px">Lng :</div>
<div class="a" style="left:277px;top:195px;width:31px;height:18px;background:#fff;box-sizing:border-box;border-top:2px solid #1a2230;border-left:2px solid #1a2230;border-bottom:1px solid #c4d0dc;border-right:1px solid #c4d0dc;"></div>
<div class="t" style="left:280px;top:197.0px;font-size:12px;color:#000;line-height:14px;">40</div>
<div class="a" style="left:308px;top:195px;width:15px;height:9px;background:#8a9bb0;box-sizing:border-box;border-top:1px solid #c4d0dc;border-left:1px solid #c4d0dc;border-bottom:1px solid #1a2230;border-right:1px solid #1a2230;border-bottom:2px solid #1a2230;border-right:2px solid #1a2230;"></div>
<div class="a" style="left:308px;top:204px;width:15px;height:9px;background:#8a9bb0;box-sizing:border-box;border-top:1px solid #c4d0dc;border-left:1px solid #c4d0dc;border-bottom:1px solid #1a2230;border-right:1px solid #1a2230;border-bottom:2px solid #1a2230;border-right:2px solid #1a2230;"></div>
<div class="a" style="left:313.5px;top:197.5px;width:0;height:0;border-left:2px solid transparent;border-right:2px solid transparent;border-bottom:2px solid #111"></div>
<div class="a" style="left:313.5px;top:207.5px;width:0;height:0;border-left:2px solid transparent;border-right:2px solid transparent;border-top:2px solid #111"></div>
<div class="t" style="left:333px;top:173px;font-size:12px;color:#000;letter-spacing:-0.5px;line-height:14px">Ticks:</div>
<div class="a" style="left:373px;top:171px;width:23px;height:18px;background:#fff;box-sizing:border-box;border-top:2px solid #1a2230;border-left:2px solid #1a2230;border-bottom:1px solid #c4d0dc;border-right:1px solid #c4d0dc;"></div>
<div class="t" style="left:376px;top:173.0px;font-size:12px;color:#000;line-height:14px;">6</div>
<div class="a" style="left:396px;top:171px;width:15px;height:9px;background:#8a9bb0;box-sizing:border-box;border-top:1px solid #c4d0dc;border-left:1px solid #c4d0dc;border-bottom:1px solid #1a2230;border-right:1px solid #1a2230;border-bottom:2px solid #1a2230;border-right:2px solid #1a2230;"></div>
<div class="a" style="left:396px;top:180px;width:15px;height:9px;background:#8a9bb0;box-sizing:border-box;border-top:1px solid #c4d0dc;border-left:1px solid #c4d0dc;border-bottom:1px solid #1a2230;border-right:1px solid #1a2230;border-bottom:2px solid #1a2230;border-right:2px solid #1a2230;"></div>
<div class="a" style="left:401.5px;top:173.5px;width:0;height:0;border-left:2px solid transparent;border-right:2px solid transparent;border-bottom:2px solid #111"></div>
<div class="a" style="left:401.5px;top:183.5px;width:0;height:0;border-left:2px solid transparent;border-right:2px solid transparent;border-top:2px solid #111"></div>
<div class="t" style="left:333px;top:197px;font-size:12px;color:#000;letter-spacing:-0.5px;line-height:14px">Tracks:</div>
<div class="a" style="left:373px;top:195px;width:23px;height:18px;background:#fff;box-sizing:border-box;border-top:2px solid #1a2230;border-left:2px solid #1a2230;border-bottom:1px solid #c4d0dc;border-right:1px solid #c4d0dc;"></div>
<div class="t" style="left:376px;top:197.0px;font-size:12px;color:#000;line-height:14px;">16</div>
<div class="a" style="left:396px;top:195px;width:15px;height:9px;background:#8a9bb0;box-sizing:border-box;border-top:1px solid #c4d0dc;border-left:1px solid #c4d0dc;border-bottom:1px solid #1a2230;border-right:1px solid #1a2230;border-bottom:2px solid #1a2230;border-right:2px solid #1a2230;"></div>
<div class="a" style="left:396px;top:204px;width:15px;height:9px;background:#8a9bb0;box-sizing:border-box;border-top:1px solid #c4d0dc;border-left:1px solid #c4d0dc;border-bottom:1px solid #1a2230;border-right:1px solid #1a2230;border-bottom:2px solid #1a2230;border-right:2px solid #1a2230;"></div>
<div class="a" style="left:401.5px;top:197.5px;width:0;height:0;border-left:2px solid transparent;border-right:2px solid transparent;border-bottom:2px solid #111"></div>
<div class="a" style="left:401.5px;top:207.5px;width:0;height:0;border-left:2px solid transparent;border-right:2px solid transparent;border-top:2px solid #111"></div>
<div class="t" style="left:425px;top:79px;font-size:12px;color:#000;line-height:14px">#</div>
<div class="a" style="left:437px;top:77px;width:26px;height:18px;background:#fff;box-sizing:border-box;border-top:2px solid #1a2230;border-left:2px solid #1a2230;border-bottom:1px solid #c4d0dc;border-right:1px solid #c4d0dc;"></div>
<div class="t" style="left:440px;top:79.0px;font-size:12px;color:#000;line-height:14px;">01</div>
<div class="a" style="left:464px;top:76px;width:15px;height:10px;background:#8a9bb0;box-sizing:border-box;border-top:1px solid #c4d0dc;border-left:1px solid #c4d0dc;border-bottom:1px solid #1a2230;border-right:1px solid #1a2230;border-bottom:2px solid #1a2230;border-right:2px solid #1a2230;"></div>
<div class="a" style="left:464px;top:86px;width:15px;height:10px;background:#8a9bb0;box-sizing:border-box;border-top:1px solid #c4d0dc;border-left:1px solid #c4d0dc;border-bottom:1px solid #1a2230;border-right:1px solid #1a2230;border-bottom:2px solid #1a2230;border-right:2px solid #1a2230;"></div>
<div class="a" style="left:469.5px;top:79.0px;width:0;height:0;border-left:2px solid transparent;border-right:2px solid transparent;border-bottom:2px solid #111"></div>
<div class="a" style="left:469.5px;top:90.0px;width:0;height:0;border-left:2px solid transparent;border-right:2px solid transparent;border-top:2px solid #111"></div>
<div class="a" style="left:488px;top:77px;width:127px;height:18px;background:#fff;box-sizing:border-box;border-top:2px solid #1a2230;border-left:2px solid #1a2230;border-bottom:1px solid #c4d0dc;border-right:1px solid #c4d0dc;"></div>
<div class="t" style="left:491px;top:79.0px;font-size:12px;color:#000;line-height:14px;">Synth1.wav</div>
<div class="a" style="left:424px;top:100px;width:592px;height:118px;background:#000;box-sizing:border-box;border-top:1px solid #1a2230;border-left:1px solid #1a2230;border-bottom:1px solid #c4d0dc;border-right:1px solid #c4d0dc"></div>
<div class="a" style="left:427px;top:104px;width:14px;height:11px;background:#f2f2f2"></div>
<svg class="a" style="left:429px;top:105px" width="10" height="6"><path d="M1.5 0.5 V3.5 Q1.5 5 2.5 5 Q3.5 5 3.5 3.5 V0.5 M6 0.5 V3.5 Q6 5 7 5 Q8 5 8 3.5 V0.5" stroke="#111" stroke-width="1.3" fill="none"/></svg>
<div class="a" style="left:442px;top:102px;width:81px;height:17px;background:#a8b4c6"></div>
<div class="t" style="left:445px;top:103px;font-size:12px;color:#000;letter-spacing:-0.6px;line-height:14px">01 - Synth1.wav</div>
<div class="a" style="left:427px;top:121px;width:14px;height:11px;background:#f2f2f2"></div>
<svg class="a" style="left:429px;top:122px" width="10" height="6"><path d="M1.5 0.5 V3.5 Q1.5 5 2.5 5 Q3.5 5 3.5 3.5 V0.5 M6 0.5 V3.5 Q6 5 7 5 Q8 5 8 3.5 V0.5" stroke="#111" stroke-width="1.3" fill="none"/></svg>
<div class="t" style="left:445px;top:120px;font-size:12px;color:#3a6a5a;letter-spacing:-0.6px;line-height:14px">02 - Synth2.wav</div>
<div class="a" style="left:427px;top:138px;width:14px;height:11px;background:#f2f2f2"></div>
<svg class="a" style="left:429px;top:139px" width="10" height="6"><path d="M1.5 0.5 V3.5 Q1.5 5 2.5 5 Q3.5 5 3.5 3.5 V0.5 M6 0.5 V3.5 Q6 5 7 5 Q8 5 8 3.5 V0.5" stroke="#111" stroke-width="1.3" fill="none"/></svg>
<div class="t" style="left:445px;top:137px;font-size:12px;color:#3a6a5a;letter-spacing:-0.6px;line-height:14px">03 - Synth3.wav</div>
<div class="a" style="left:0px;top:222px;width:268px;height:474px;background:#8698ac"></div>
<div class="a" style="left:8px;top:224px;width:26px;height:21px;box-sizing:border-box;border-top:1px solid #1a2230;border-left:1px solid #1a2230;border-bottom:1px solid #c4d0dc;border-right:1px solid #c4d0dc;background:repeating-conic-gradient(#b8c4d2 0 25%, #8a9bb0 0 50%) 0 0/2px 2px"></div>
<div class="a" style="left:15px;top:229px;width:12px;height:12px;background:#0a3a10;border:1px solid #222"><div style="position:absolute;left:1px;top:0;font:bold 5px/5px 'Liberation Mono';color:#80f080">C-4<br>B-4</div></div>
<div class="a" style="left:34px;top:224px;width:26px;height:21px;background:#8a9bb0;box-sizing:border-box;border-top:1px solid #c4d0dc;border-left:1px solid #c4d0dc;border-bottom:1px solid #1a2230;border-right:1px solid #1a2230;border-bottom:2px solid #1a2230;border-right:2px solid #1a2230"></div>
<svg class="a" style="left:40px;top:228px" width="14" height="13">
<path d="M4 1 L1 5 H3 V11 H5 V5 H7 Z" fill="#102060"/><path d="M10 12 L13 8 H11 V2 H9 V8 H7 Z" fill="#102060"/></svg>
<svg class="a" style="left:155px;top:222px" width="112" height="20">
<rect x="6" y="4" width="14" height="13" fill="#f4f4f4"/><path d="M9 4 V11 M12 4 V11 M15 4 V11 M18 4 V11" stroke="#111" stroke-width="1.3"/>
<path d="M33 8 L45 12 L33 16 Z" fill="#20c020"/><rect x="32" y="10" width="5" height="4" fill="#20c020"/>
<rect x="56" y="2" width="1" height="17" fill="#5a6a80"/><rect x="57" y="2" width="1" height="17" fill="#c0ccd8"/>
<rect x="67" y="10" width="2" height="7" fill="#20b020"/><rect x="70" y="7" width="2" height="10" fill="#40c020"/><rect x="73" y="4" width="2" height="13" fill="#e0c020"/><rect x="76" y="8" width="2" height="9" fill="#40c020"/><rect x="79" y="11" width="2" height="6" fill="#20b020"/><rect x="74" y="4" width="2" height="3" fill="#e03020"/>
<path d="M92 5 H100 V8 H95 V10 H99 V13 H95 V17 H92 Z" fill="#b01818"/><path d="M101 5 L108 17 M108 5 L101 17" stroke="#c81818" stroke-width="3"/>
</svg>
<div class="t" style="left:30px;top:253px;font-size:12px;color:#000;letter-spacing:-0.5px;line-height:14px">Track 00</div>
<div class="t" style="left:173px;top:253px;font-size:12px;color:#000;letter-spacing:-0.5px;line-height:14px">Track 01</div>
<div class="a" style="left:0px;top:267px;width:5px;height:400px;background:#a4b4c6"></div>
<div class="a" style="left:5px;top:270px;width:261px;height:396px;background:#000"></div>
<div class="a" style="left:4px;top:269px;width:263px;height:1px;background:#2a3446"></div>
<div class="a" style="left:4px;top:665px;width:263px;height:2px;background:#b8c4d0"></div>
<div class="a" style="left:266px;top:269px;width:2px;height:398px;background:#b8c4d0"></div>
<div class="a" style="left:5px;top:452px;width:261px;height:21px;background:#a4b4c6;border-top:1px solid #dfe6ee;border-bottom:1px solid #6a7a8c;box-sizing:border-box"></div>
<svg class="a" style="left:4px;top:270px" width="262" height="395"><use href="#g2" x="5" y="4" fill="#4a9080"/><use href="#gE" x="13" y="4" fill="#4a9080"/><rect x="27" y="6" width="23" height="4" fill="#101212"/><use href="#g0" x="54" y="4" fill="#4a9890"/><use href="#g0" x="62" y="4" fill="#4a9890"/><rect x="76" y="6" width="34" height="4" fill="#101212"/><use href="#g0" x="115" y="4" fill="#4a9890"/><use href="#g0" x="123" y="4" fill="#4a9890"/><use href="#g0" x="133" y="4" fill="#4a9890"/><use href="#g0" x="141" y="4" fill="#4a9890"/><use href="#g0" x="149" y="4" fill="#4a9890"/><use href="#g0" x="157" y="4" fill="#4a9890"/><rect x="171" y="6" width="22" height="4" fill="#101212"/><use href="#g0" x="199" y="4" fill="#4a9890"/><use href="#g0" x="207" y="4" fill="#4a9890"/><rect x="219" y="6" width="35" height="4" fill="#101212"/><use href="#g0" x="258" y="4" fill="#4a9890"/><use href="#g2" x="5" y="16" fill="#4a9080"/><use href="#gF" x="13" y="16" fill="#4a9080"/><rect x="27" y="18" width="23" height="4" fill="#101212"/><use href="#g0" x="54" y="16" fill="#4a9890"/><use href="#g0" x="62" y="16" fill="#4a9890"/><rect x="76" y="18" width="34" height="4" fill="#101212"/><use href="#g0" x="115" y="16" fill="#4a9890"/><use href="#g0" x="123" y="16" fill="#4a9890"/><use href="#g0" x="133" y="16" fill="#4a9890"/><use href="#g0" x="141" y="16" fill="#4a9890"/><use href="#g0" x="149" y="16" fill="#4a9890"/><use href="#g0" x="157" y="16" fill="#4a9890"/><rect x="171" y="18" width="22" height="4" fill="#101212"/><use href="#g0" x="199" y="16" fill="#4a9890"/><use href="#g0" x="207" y="16" fill="#4a9890"/><use href="#g0" x="219" y="16" fill="#4a9890"/><use href="#g0" x="227" y="16" fill="#4a9890"/><rect x="239" y="18" width="15" height="4" fill="#101212"/><use href="#g0" x="258" y="16" fill="#4a9890"/><use href="#g3" x="5" y="28" fill="#f0e480"/><use href="#g0" x="13" y="28" fill="#f0e480"/><use href="#gC" x="27" y="28" fill="#f0e480"/><use href="#gdash" x="35" y="28" fill="#f0e480"/><use href="#g4" x="43" y="28" fill="#f0e480"/><use href="#g0" x="54" y="28" fill="#f0e480"/><use href="#g1" x="62" y="28" fill="#f0e480"/><rect x="76" y="31" width="1" height="1" fill="#6a6a60"/><rect x="76" y="33" width="1" height="1" fill="#6a6a60"/><rect x="78" y="31" width="1" height="1" fill="#6a6a60"/><rect x="78" y="33" width="1" height="1" fill="#6a6a60"/><rect x="80" y="31" width="1" height="1" fill="#6a6a60"/><rect x="80" y="33" width="1" height="1" fill="#6a6a60"/><rect x="82" y="31" width="1" height="1" fill="#6a6a60"/><rect x="82" y="33" width="1" height="1" fill="#6a6a60"/><rect x="84" y="31" width="1" height="1" fill="#6a6a60"/><rect x="84" y="33" width="1" height="1" fill="#6a6a60"/><rect x="86" y="31" width="1" height="1" fill="#6a6a60"/><rect x="86" y="33" width="1" height="1" fill="#6a6a60"/><rect x="88" y="31" width="1" height="1" fill="#6a6a60"/><rect x="88" y="33" width="1" height="1" fill="#6a6a60"/><rect x="90" y="31" width="1" height="1" fill="#6a6a60"/><rect x="90" y="33" width="1" height="1" fill="#6a6a60"/><rect x="92" y="31" width="1" height="1" fill="#6a6a60"/><rect x="92" y="33" width="1" height="1" fill="#6a6a60"/><rect x="94" y="31" width="1" height="1" fill="#6a6a60"/><rect x="94" y="33" width="1" height="1" fill="#6a6a60"/><rect x="96" y="31" width="1" height="1" fill="#6a6a60"/><rect x="96" y="33" width="1" height="1" fill="#6a6a60"/><rect x="98" y="31" width="1" height="1" fill="#6a6a60"/><rect x="98" y="33" width="1" height="1" fill="#6a6a60"/><rect x="100" y="31" width="1" height="1" fill="#6a6a60"/><rect x="100" y="33" width="1" height="1" fill="#6a6a60"/><rect x="102" y="31" width="1" height="1" fill="#6a6a60"/><rect x="102" y="33" width="1" height="1" fill="#6a6a60"/><rect x="104" y="31" width="1" height="1" fill="#6a6a60"/><rect x="104" y="33" width="1" height="1" fill="#6a6a60"/><rect x="106" y="31" width="1" height="1" fill="#6a6a60"/><rect x="106" y="33" width="1" height="1" fill="#6a6a60"/><rect x="108" y="31" width="1" height="1" fill="#6a6a60"/><rect x="108" y="33" width="1" height="1" fill="#6a6a60"/><use href="#g0" x="115" y="28" fill="#f0e480"/><use href="#g0" x="123" y="28" fill="#f0e480"/><use href="#g0" x="133" y="28" fill="#f0e480"/><use href="#g0" x="141" y="28" fill="#f0e480"/><use href="#g0" x="149" y="28" fill="#f0e480"/><use href="#g0" x="157" y="28" fill="#f0e480"/><use href="#gC" x="171" y="28" fill="#f0e480"/><use href="#gdash" x="179" y="28" fill="#f0e480"/><use href="#g6" x="187" y="28" fill="#f0e480"/><use href="#g0" x="199" y="28" fill="#f0e480"/><use href="#g1" x="207" y="28" fill="#f0e480"/><rect x="221" y="31" width="1" height="1" fill="#6a6a60"/><rect x="221" y="33" width="1" height="1" fill="#6a6a60"/><rect x="223" y="31" width="1" height="1" fill="#6a6a60"/><rect x="223" y="33" width="1" height="1" fill="#6a6a60"/><rect x="225" y="31" width="1" height="1" fill="#6a6a60"/><rect x="225" y="33" width="1" height="1" fill="#6a6a60"/><rect x="227" y="31" width="1" height="1" fill="#6a6a60"/><rect x="227" y="33" width="1" height="1" fill="#6a6a60"/><rect x="229" y="31" width="1" height="1" fill="#6a6a60"/><rect x="229" y="33" width="1" height="1" fill="#6a6a60"/><rect x="231" y="31" width="1" height="1" fill="#6a6a60"/><rect x="231" y="33" width="1" height="1" fill="#6a6a60"/><rect x="233" y="31" width="1" height="1" fill="#6a6a60"/><rect x="233" y="33" width="1" height="1" fill="#6a6a60"/><rect x="235" y="31" width="1" height="1" fill="#6a6a60"/><rect x="235" y="33" width="1" height="1" fill="#6a6a60"/><rect x="237" y="31" width="1" height="1" fill="#6a6a60"/><rect x="237" y="33" width="1" height="1" fill="#6a6a60"/><rect x="239" y="31" width="1" height="1" fill="#6a6a60"/><rect x="239" y="33" width="1" height="1" fill="#6a6a60"/><rect x="241" y="31" width="1" height="1" fill="#6a6a60"/><rect x="241" y="33" width="1" height="1" fill="#6a6a60"/><rect x="243" y="31" width="1" height="1" fill="#6a6a60"/><rect x="243" y="33" width="1" height="1" fill="#6a6a60"/><rect x="245" y="31" width="1" height="1" fill="#6a6a60"/><rect x="245" y="33" width="1" height="1" fill="#6a6a60"/><rect x="247" y="31" width="1" height="1" fill="#6a6a60"/><rect x="247" y="33" width="1" height="1" fill="#6a6a60"/><rect x="249" y="31" width="1" height="1" fill="#6a6a60"/><rect x="249" y="33" width="1" height="1" fill="#6a6a60"/><rect x="251" y="31" width="1" height="1" fill="#6a6a60"/><rect x="251" y="33" width="1" height="1" fill="#6a6a60"/><rect x="253" y="31" width="1" height="1" fill="#6a6a60"/><rect x="253" y="33" width="1" height="1" fill="#6a6a60"/><use href="#g0" x="258" y="28" fill="#f0e480"/><use href="#g3" x="5" y="40" fill="#4a9080"/><use href="#g1" x="13" y="40" fill="#4a9080"/><rect x="29" y="43" width="19" height="1" fill="#90a0a0"/><rect x="29" y="45" width="19" height="1" fill="#90a0a0"/><use href="#g0" x="54" y="40" fill="#4a9890"/><use href="#g0" x="62" y="40" fill="#4a9890"/><rect x="76" y="42" width="34" height="4" fill="#101212"/><use href="#g0" x="115" y="40" fill="#4a9890"/><use href="#g0" x="123" y="40" fill="#4a9890"/><use href="#g0" x="133" y="40" fill="#4a9890"/><use href="#g0" x="141" y="40" fill="#4a9890"/><use href="#g0" x="149" y="40" fill="#4a9890"/><use href="#g0" x="157" y="40" fill="#4a9890"/><rect x="173" y="43" width="19" height="1" fill="#90a0a0"/><rect x="173" y="45" width="19" height="1" fill="#90a0a0"/><use href="#g0" x="199" y="40" fill="#4a9890"/><use href="#g0" x="207" y="40" fill="#4a9890"/><use href="#g0" x="219" y="40" fill="#4a9890"/><use href="#g0" x="227" y="40" fill="#4a9890"/><rect x="239" y="42" width="15" height="4" fill="#101212"/><use href="#g0" x="258" y="40" fill="#4a9890"/><use href="#g3" x="5" y="52" fill="#4a9080"/><use href="#g2" x="13" y="52" fill="#4a9080"/><rect x="27" y="54" width="23" height="4" fill="#101212"/><use href="#g0" x="54" y="52" fill="#4a9890"/><use href="#g0" x="62" y="52" fill="#4a9890"/><rect x="76" y="54" width="34" height="4" fill="#101212"/><use href="#g0" x="115" y="52" fill="#4a9890"/><use href="#g0" x="123" y="52" fill="#4a9890"/><use href="#g0" x="133" y="52" fill="#4a9890"/><use href="#g0" x="141" y="52" fill="#4a9890"/><use href="#g0" x="149" y="52" fill="#4a9890"/><use href="#g0" x="157" y="52" fill="#4a9890"/><rect x="171" y="54" width="22" height="4" fill="#101212"/><use href="#g0" x="199" y="52" fill="#4a9890"/><use href="#g0" x="207" y="52" fill="#4a9890"/><rect x="219" y="54" width="35" height="4" fill="#101212"/><use href="#g0" x="258" y="52" fill="#4a9890"/><use href="#g3" x="5" y="64" fill="#4a9080"/><use href="#g3" x="13" y="64" fill="#4a9080"/><rect x="27" y="66" width="23" height="4" fill="#101212"/><use href="#g0" x="54" y="64" fill="#4a9890"/><use href="#g0" x="62" y="64" fill="#4a9890"/><rect x="76" y="66" width="34" height="4" fill="#101212"/><use href="#g0" x="115" y="64" fill="#4a9890"/><use href="#g0" x="123" y="64" fill="#4a9890"/><use href="#g0" x="133" y="64" fill="#4a9890"/><use href="#g0" x="141" y="64" fill="#4a9890"/><use href="#g0" x="149" y="64" fill="#4a9890"/><use href="#g0" x="157" y="64" fill="#4a9890"/><rect x="171" y="66" width="22" height="4" fill="#101212"/><use href="#g0" x="199" y="64" fill="#4a9890"/><use href="#g0" x="207" y="64" fill="#4a9890"/><use href="#g0" x="219" y="64" fill="#4a9890"/><use href="#g0" x="227" y="64" fill="#4a9890"/><rect x="239" y="66" width="15" height="4" fill="#101212"/><use href="#g0" x="258" y="64" fill="#4a9890"/><use href="#g3" x="5" y="76" fill="#4a9080"/><use href="#g4" x="13" y="76" fill="#4a9080"/><rect x="27" y="78" width="23" height="4" fill="#101212"/><use href="#g0" x="54" y="76" fill="#4a9890"/><use href="#g0" x="62" y="76" fill="#4a9890"/><rect x="76" y="78" width="34" height="4" fill="#101212"/><use href="#g0" x="115" y="76" fill="#4a9890"/><use href="#g0" x="123" y="76" fill="#4a9890"/><use href="#g0" x="133" y="76" fill="#4a9890"/><use href="#g0" x="141" y="76" fill="#4a9890"/><use href="#g0" x="149" y="76" fill="#4a9890"/><use href="#g0" x="157" y="76" fill="#4a9890"/><rect x="171" y="78" width="22" height="4" fill="#101212"/><use href="#g0" x="199" y="76" fill="#4a9890"/><use href="#g0" x="207" y="76" fill="#4a9890"/><rect x="219" y="78" width="35" height="4" fill="#101212"/><use href="#g0" x="258" y="76" fill="#4a9890"/><use href="#g3" x="5" y="88" fill="#4a9080"/><use href="#g5" x="13" y="88" fill="#4a9080"/><rect x="27" y="90" width="23" height="4" fill="#101212"/><use href="#g0" x="54" y="88" fill="#4a9890"/><use href="#g0" x="62" y="88" fill="#4a9890"/><rect x="76" y="90" width="34" height="4" fill="#101212"/><use href="#g0" x="115" y="88" fill="#4a9890"/><use href="#g0" x="123" y="88" fill="#4a9890"/><use href="#g0" x="133" y="88" fill="#4a9890"/><use href="#g0" x="141" y="88" fill="#4a9890"/><use href="#g0" x="149" y="88" fill="#4a9890"/><use href="#g0" x="157" y="88" fill="#4a9890"/><rect x="171" y="90" width="22" height="4" fill="#101212"/><use href="#g0" x="199" y="88" fill="#4a9890"/><use href="#g0" x="207" y="88" fill="#4a9890"/><use href="#g0" x="219" y="88" fill="#4a9890"/><use href="#g0" x="227" y="88" fill="#4a9890"/><rect x="239" y="90" width="15" height="4" fill="#101212"/><use href="#g0" x="258" y="88" fill="#4a9890"/><use href="#g3" x="5" y="100" fill="#4a9080"/><use href="#g6" x="13" y="100" fill="#4a9080"/><rect x="27" y="102" width="23" height="4" fill="#101212"/><use href="#g0" x="54" y="100" fill="#4a9890"/><use href="#g0" x="62" y="100" fill="#4a9890"/><rect x="76" y="102" width="34" height="4" fill="#101212"/><use href="#g0" x="115" y="100" fill="#4a9890"/><use href="#g0" x="123" y="100" fill="#4a9890"/><use href="#g0" x="133" y="100" fill="#4a9890"/><use href="#g0" x="141" y="100" fill="#4a9890"/><use href="#g0" x="149" y="100" fill="#4a9890"/><use href="#g0" x="157" y="100" fill="#4a9890"/><rect x="171" y="102" width="22" height="4" fill="#101212"/><use href="#g0" x="199" y="100" fill="#4a9890"/><use href="#g0" x="207" y="100" fill="#4a9890"/><rect x="219" y="102" width="35" height="4" fill="#101212"/><use href="#g0" x="258" y="100" fill="#4a9890"/><use href="#g3" x="5" y="112" fill="#4a9080"/><use href="#g7" x="13" y="112" fill="#4a9080"/><rect x="27" y="114" width="23" height="4" fill="#101212"/><use href="#g0" x="54" y="112" fill="#4a9890"/><use href="#g0" x="62" y="112" fill="#4a9890"/><rect x="76" y="114" width="34" height="4" fill="#101212"/><use href="#g0" x="115" y="112" fill="#4a9890"/><use href="#g0" x="123" y="112" fill="#4a9890"/><use href="#g0" x="133" y="112" fill="#4a9890"/><use href="#g0" x="141" y="112" fill="#4a9890"/><use href="#g0" x="149" y="112" fill="#4a9890"/><use href="#g0" x="157" y="112" fill="#4a9890"/><rect x="171" y="114" width="22" height="4" fill="#101212"/><use href="#g0" x="199" y="112" fill="#4a9890"/><use href="#g0" x="207" y="112" fill="#4a9890"/><use href="#g0" x="219" y="112" fill="#4a9890"/><use href="#g0" x="227" y="112" fill="#4a9890"/><rect x="239" y="114" width="15" height="4" fill="#101212"/><use href="#g0" x="258" y="112" fill="#4a9890"/><use href="#g3" x="5" y="124" fill="#f0e480"/><use href="#g8" x="13" y="124" fill="#f0e480"/><rect x="27" y="127" width="1" height="1" fill="#6a6a60"/><rect x="27" y="129" width="1" height="1" fill="#6a6a60"/><rect x="29" y="127" width="1" height="1" fill="#6a6a60"/><rect x="29" y="129" width="1" height="1" fill="#6a6a60"/><rect x="31" y="127" width="1" height="1" fill="#6a6a60"/><rect x="31" y="129" width="1" height="1" fill="#6a6a60"/><rect x="33" y="127" width="1" height="1" fill="#6a6a60"/><rect x="33" y="129" width="1" height="1" fill="#6a6a60"/><rect x="35" y="127" width="1" height="1" fill="#6a6a60"/><rect x="35" y="129" width="1" height="1" fill="#6a6a60"/><rect x="37" y="127" width="1" height="1" fill="#6a6a60"/><rect x="37" y="129" width="1" height="1" fill="#6a6a60"/><rect x="39" y="127" width="1" height="1" fill="#6a6a60"/><rect x="39" y="129" width="1" height="1" fill="#6a6a60"/><rect x="41" y="127" width="1" height="1" fill="#6a6a60"/><rect x="41" y="129" width="1" height="1" fill="#6a6a60"/><rect x="43" y="127" width="1" height="1" fill="#6a6a60"/><rect x="43" y="129" width="1" height="1" fill="#6a6a60"/><rect x="45" y="127" width="1" height="1" fill="#6a6a60"/><rect x="45" y="129" width="1" height="1" fill="#6a6a60"/><rect x="47" y="127" width="1" height="1" fill="#6a6a60"/><rect x="47" y="129" width="1" height="1" fill="#6a6a60"/><rect x="49" y="127" width="1" height="1" fill="#6a6a60"/><rect x="49" y="129" width="1" height="1" fill="#6a6a60"/><use href="#g0" x="54" y="124" fill="#f0e480"/><use href="#g0" x="62" y="124" fill="#f0e480"/><rect x="76" y="127" width="1" height="1" fill="#6a6a60"/><rect x="76" y="129" width="1" height="1" fill="#6a6a60"/><rect x="78" y="127" width="1" height="1" fill="#6a6a60"/><rect x="78" y="129" width="1" height="1" fill="#6a6a60"/><rect x="80" y="127" width="1" height="1" fill="#6a6a60"/><rect x="80" y="129" width="1" height="1" fill="#6a6a60"/><rect x="82" y="127" width="1" height="1" fill="#6a6a60"/><rect x="82" y="129" width="1" height="1" fill="#6a6a60"/><rect x="84" y="127" width="1" height="1" fill="#6a6a60"/><rect x="84" y="129" width="1" height="1" fill="#6a6a60"/><rect x="86" y="127" width="1" height="1" fill="#6a6a60"/><rect x="86" y="129" width="1" height="1" fill="#6a6a60"/><rect x="88" y="127" width="1" height="1" fill="#6a6a60"/><rect x="88" y="129" width="1" height="1" fill="#6a6a60"/><rect x="90" y="127" width="1" height="1" fill="#6a6a60"/><rect x="90" y="129" width="1" height="1" fill="#6a6a60"/><rect x="92" y="127" width="1" height="1" fill="#6a6a60"/><rect x="92" y="129" width="1" height="1" fill="#6a6a60"/><rect x="94" y="127" width="1" height="1" fill="#6a6a60"/><rect x="94" y="129" width="1" height="1" fill="#6a6a60"/><rect x="96" y="127" width="1" height="1" fill="#6a6a60"/><rect x="96" y="129" width="1" height="1" fill="#6a6a60"/><rect x="98" y="127" width="1" height="1" fill="#6a6a60"/><rect x="98" y="129" width="1" height="1" fill="#6a6a60"/><rect x="100" y="127" width="1" height="1" fill="#6a6a60"/><rect x="100" y="129" width="1" height="1" fill="#6a6a60"/><rect x="102" y="127" width="1" height="1" fill="#6a6a60"/><rect x="102" y="129" width="1" height="1" fill="#6a6a60"/><rect x="104" y="127" width="1" height="1" fill="#6a6a60"/><rect x="104" y="129" width="1" height="1" fill="#6a6a60"/><rect x="106" y="127" width="1" height="1" fill="#6a6a60"/><rect x="106" y="129" width="1" height="1" fill="#6a6a60"/><rect x="108" y="127" width="1" height="1" fill="#6a6a60"/><rect x="108" y="129" width="1" height="1" fill="#6a6a60"/><use href="#g0" x="115" y="124" fill="#f0e480"/><use href="#g0" x="123" y="124" fill="#f0e480"/><use href="#g0" x="133" y="124" fill="#f0e480"/><use href="#g0" x="141" y="124" fill="#f0e480"/><use href="#g0" x="149" y="124" fill="#f0e480"/><use href="#g0" x="157" y="124" fill="#f0e480"/><use href="#gC" x="171" y="124" fill="#f0e480"/><use href="#gdash" x="179" y="124" fill="#f0e480"/><use href="#g6" x="187" y="124" fill="#f0e480"/><use href="#g0" x="199" y="124" fill="#f0e480"/><use href="#g1" x="207" y="124" fill="#f0e480"/><use href="#g4" x="219" y="124" fill="#f0e480"/><use href="#g0" x="227" y="124" fill="#f0e480"/><rect x="239" y="127" width="1" height="1" fill="#6a6a60"/><rect x="239" y="129" width="1" height="1" fill="#6a6a60"/><rect x="241" y="127" width="1" height="1" fill="#6a6a60"/><rect x="241" y="129" width="1" height="1" fill="#6a6a60"/><rect x="243" y="127" width="1" height="1" fill="#6a6a60"/><rect x="243" y="129" width="1" height="1" fill="#6a6a60"/><rect x="245" y="127" width="1" height="1" fill="#6a6a60"/><rect x="245" y="129" width="1" height="1" fill="#6a6a60"/><rect x="247" y="127" width="1" height="1" fill="#6a6a60"/><rect x="247" y="129" width="1" height="1" fill="#6a6a60"/><rect x="249" y="127" width="1" height="1" fill="#6a6a60"/><rect x="249" y="129" width="1" height="1" fill="#6a6a60"/><rect x="251" y="127" width="1" height="1" fill="#6a6a60"/><rect x="251" y="129" width="1" height="1" fill="#6a6a60"/><rect x="253" y="127" width="1" height="1" fill="#6a6a60"/><rect x="253" y="129" width="1" height="1" fill="#6a6a60"/><use href="#g0" x="258" y="124" fill="#f0e480"/><use href="#g3" x="5" y="136" fill="#4a9080"/><use href="#g9" x="13" y="136" fill="#4a9080"/><rect x="27" y="138" width="23" height="4" fill="#101212"/><use href="#g0" x="54" y="136" fill="#4a9890"/><use href="#g0" x="62" y="136" fill="#4a9890"/><rect x="76" y="138" width="34" height="4" fill="#101212"/><use href="#g0" x="115" y="136" fill="#4a9890"/><use href="#g0" x="123" y="136" fill="#4a9890"/><use href="#g0" x="133" y="136" fill="#4a9890"/><use href="#g0" x="141" y="136" fill="#4a9890"/><use href="#g0" x="149" y="136" fill="#4a9890"/><use href="#g0" x="157" y="136" fill="#4a9890"/><rect x="171" y="138" width="22" height="4" fill="#101212"/><use href="#g0" x="199" y="136" fill="#4a9890"/><use href="#g0" x="207" y="136" fill="#4a9890"/><use href="#g0" x="219" y="136" fill="#4a9890"/><use href="#g0" x="227" y="136" fill="#4a9890"/><rect x="239" y="138" width="15" height="4" fill="#101212"/><use href="#g0" x="258" y="136" fill="#4a9890"/><use href="#g3" x="5" y="148" fill="#4a9080"/><use href="#gA" x="13" y="148" fill="#4a9080"/><rect x="27" y="150" width="23" height="4" fill="#101212"/><use href="#g0" x="54" y="148" fill="#4a9890"/><use href="#g0" x="62" y="148" fill="#4a9890"/><rect x="76" y="150" width="34" height="4" fill="#101212"/><use href="#g0" x="115" y="148" fill="#4a9890"/><use href="#g0" x="123" y="148" fill="#4a9890"/><use href="#g0" x="133" y="148" fill="#4a9890"/><use href="#g0" x="141" y="148" fill="#4a9890"/><use href="#g0" x="149" y="148" fill="#4a9890"/><use href="#g0" x="157" y="148" fill="#4a9890"/><rect x="171" y="150" width="22" height="4" fill="#101212"/><use href="#g0" x="199" y="148" fill="#4a9890"/><use href="#g0" x="207" y="148" fill="#4a9890"/><rect x="219" y="150" width="35" height="4" fill="#101212"/><use href="#g0" x="258" y="148" fill="#4a9890"/><use href="#g3" x="5" y="160" fill="#4a9080"/><use href="#gB" x="13" y="160" fill="#4a9080"/><rect x="27" y="162" width="23" height="4" fill="#101212"/><use href="#g0" x="54" y="160" fill="#4a9890"/><use href="#g0" x="62" y="160" fill="#4a9890"/><rect x="76" y="162" width="34" height="4" fill="#101212"/><use href="#g0" x="115" y="160" fill="#4a9890"/><use href="#g0" x="123" y="160" fill="#4a9890"/><use href="#g0" x="133" y="160" fill="#4a9890"/><use href="#g0" x="141" y="160" fill="#4a9890"/><use href="#g0" x="149" y="160" fill="#4a9890"/><use href="#g0" x="157" y="160" fill="#4a9890"/><rect x="171" y="162" width="22" height="4" fill="#101212"/><use href="#g0" x="199" y="160" fill="#4a9890"/><use href="#g0" x="207" y="160" fill="#4a9890"/><use href="#g0" x="219" y="160" fill="#4a9890"/><use href="#g0" x="227" y="160" fill="#4a9890"/><rect x="239" y="162" width="15" height="4" fill="#101212"/><use href="#g0" x="258" y="160" fill="#4a9890"/><use href="#g3" x="5" y="172" fill="#4a9080"/><use href="#gC" x="13" y="172" fill="#4a9080"/><rect x="27" y="174" width="23" height="4" fill="#101212"/><use href="#g0" x="54" y="172" fill="#4a9890"/><use href="#g0" x="62" y="172" fill="#4a9890"/><rect x="76" y="174" width="34" height="4" fill="#101212"/><use href="#g0" x="115" y="172" fill="#4a9890"/><use href="#g0" x="123" y="172" fill="#4a9890"/><use href="#g0" x="133" y="172" fill="#4a9890"/><use href="#g0" x="141" y="172" fill="#4a9890"/><use href="#g0" x="149" y="172" fill="#4a9890"/><use href="#g0" x="157" y="172" fill="#4a9890"/><use href="#gB" x="171" y="172" fill="#4a9080"/><use href="#gdash" x="179" y="172" fill="#4a9080"/><use href="#g5" x="187" y="172" fill="#4a9080"/><use href="#g0" x="199" y="172" fill="#4a9080"/><use href="#g1" x="207" y="172" fill="#4a9080"/><use href="#g4" x="219" y="172" fill="#4a9080"/><use href="#g0" x="227" y="172" fill="#4a9080"/><use href="#g0" x="258" y="172" fill="#4a9890"/><use href="#g3" x="5" y="189" fill="#000"/><use href="#gD" x="13" y="189" fill="#000"/><rect x="27" y="186" width="23" height="12" fill="#2a68d0"/><rect x="27" y="186" width="23" height="1" fill="#5a98f0"/><rect x="30" y="190" width="1" height="1" fill="#a0c8ff"/><rect x="30" y="192" width="1" height="1" fill="#a0c8ff"/><rect x="32" y="190" width="1" height="1" fill="#a0c8ff"/><rect x="32" y="192" width="1" height="1" fill="#a0c8ff"/><rect x="34" y="190" width="1" height="1" fill="#a0c8ff"/><rect x="34" y="192" width="1" height="1" fill="#a0c8ff"/><rect x="36" y="190" width="1" height="1" fill="#a0c8ff"/><rect x="36" y="192" width="1" height="1" fill="#a0c8ff"/><rect x="38" y="190" width="1" height="1" fill="#a0c8ff"/><rect x="38" y="192" width="1" height="1" fill="#a0c8ff"/><rect x="40" y="190" width="1" height="1" fill="#a0c8ff"/><rect x="40" y="192" width="1" height="1" fill="#a0c8ff"/><rect x="42" y="190" width="1" height="1" fill="#a0c8ff"/><rect x="42" y="192" width="1" height="1" fill="#a0c8ff"/><rect x="44" y="190" width="1" height="1" fill="#a0c8ff"/><rect x="44" y="192" width="1" height="1" fill="#a0c8ff"/><rect x="46" y="190" width="1" height="1" fill="#a0c8ff"/><rect x="46" y="192" width="1" height="1" fill="#a0c8ff"/><use href="#g0" x="54" y="189" fill="#000"/><use href="#g0" x="62" y="189" fill="#000"/><rect x="76" y="192" width="1" height="1" fill="#687888"/><rect x="76" y="194" width="1" height="1" fill="#687888"/><rect x="78" y="192" width="1" height="1" fill="#687888"/><rect x="78" y="194" width="1" height="1" fill="#687888"/><rect x="80" y="192" width="1" height="1" fill="#687888"/><rect x="80" y="194" width="1" height="1" fill="#687888"/><rect x="82" y="192" width="1" height="1" fill="#687888"/><rect x="82" y="194" width="1" height="1" fill="#687888"/><rect x="84" y="192" width="1" height="1" fill="#687888"/><rect x="84" y="194" width="1" height="1" fill="#687888"/><rect x="86" y="192" width="1" height="1" fill="#687888"/><rect x="86" y="194" width="1" height="1" fill="#687888"/><rect x="88" y="192" width="1" height="1" fill="#687888"/><rect x="88" y="194" width="1" height="1" fill="#687888"/><rect x="90" y="192" width="1" height="1" fill="#687888"/><rect x="90" y="194" width="1" height="1" fill="#687888"/><rect x="92" y="192" width="1" height="1" fill="#687888"/><rect x="92" y="194" width="1" height="1" fill="#687888"/><rect x="94" y="192" width="1" height="1" fill="#687888"/><rect x="94" y="194" width="1" height="1" fill="#687888"/><rect x="96" y="192" width="1" height="1" fill="#687888"/><rect x="96" y="194" width="1" height="1" fill="#687888"/><rect x="98" y="192" width="1" height="1" fill="#687888"/><rect x="98" y="194" width="1" height="1" fill="#687888"/><rect x="100" y="192" width="1" height="1" fill="#687888"/><rect x="100" y="194" width="1" height="1" fill="#687888"/><rect x="102" y="192" width="1" height="1" fill="#687888"/><rect x="102" y="194" width="1" height="1" fill="#687888"/><rect x="104" y="192" width="1" height="1" fill="#687888"/><rect x="104" y="194" width="1" height="1" fill="#687888"/><rect x="106" y="192" width="1" height="1" fill="#687888"/><rect x="106" y="194" width="1" height="1" fill="#687888"/><rect x="108" y="192" width="1" height="1" fill="#687888"/><rect x="108" y="194" width="1" height="1" fill="#687888"/><use href="#g0" x="115" y="189" fill="#000"/><use href="#g0" x="123" y="189" fill="#000"/><use href="#g0" x="133" y="189" fill="#000"/><use href="#g0" x="141" y="189" fill="#000"/><use href="#g0" x="149" y="189" fill="#000"/><use href="#g0" x="157" y="189" fill="#000"/><rect x="172" y="192" width="1" height="1" fill="#687888"/><rect x="172" y="194" width="1" height="1" fill="#687888"/><rect x="174" y="192" width="1" height="1" fill="#687888"/><rect x="174" y="194" width="1" height="1" fill="#687888"/><rect x="176" y="192" width="1" height="1" fill="#687888"/><rect x="176" y="194" width="1" height="1" fill="#687888"/><rect x="178" y="192" width="1" height="1" fill="#687888"/><rect x="178" y="194" width="1" height="1" fill="#687888"/><rect x="180" y="192" width="1" height="1" fill="#687888"/><rect x="180" y="194" width="1" height="1" fill="#687888"/><rect x="182" y="192" width="1" height="1" fill="#687888"/><rect x="182" y="194" width="1" height="1" fill="#687888"/><rect x="184" y="192" width="1" height="1" fill="#687888"/><rect x="184" y="194" width="1" height="1" fill="#687888"/><rect x="186" y="192" width="1" height="1" fill="#687888"/><rect x="186" y="194" width="1" height="1" fill="#687888"/><rect x="188" y="192" width="1" height="1" fill="#687888"/><rect x="188" y="194" width="1" height="1" fill="#687888"/><rect x="190" y="192" width="1" height="1" fill="#687888"/><rect x="190" y="194" width="1" height="1" fill="#687888"/><rect x="192" y="192" width="1" height="1" fill="#687888"/><rect x="192" y="194" width="1" height="1" fill="#687888"/><use href="#g0" x="199" y="189" fill="#000"/><use href="#g0" x="207" y="189" fill="#000"/><use href="#g0" x="219" y="189" fill="#000"/><use href="#g0" x="227" y="189" fill="#000"/><rect x="239" y="192" width="1" height="1" fill="#687888"/><rect x="239" y="194" width="1" height="1" fill="#687888"/><rect x="241" y="192" width="1" height="1" fill="#687888"/><rect x="241" y="194" width="1" height="1" fill="#687888"/><rect x="243" y="192" width="1" height="1" fill="#687888"/><rect x="243" y="194" width="1" height="1" fill="#687888"/><rect x="245" y="192" width="1" height="1" fill="#687888"/><rect x="245" y="194" width="1" height="1" fill="#687888"/><rect x="247" y="192" width="1" height="1" fill="#687888"/><rect x="247" y="194" width="1" height="1" fill="#687888"/><rect x="249" y="192" width="1" height="1" fill="#687888"/><rect x="249" y="194" width="1" height="1" fill="#687888"/><rect x="251" y="192" width="1" height="1" fill="#687888"/><rect x="251" y="194" width="1" height="1" fill="#687888"/><rect x="253" y="192" width="1" height="1" fill="#687888"/><rect x="253" y="194" width="1" height="1" fill="#687888"/><use href="#g0" x="258" y="189" fill="#000"/><use href="#g3" x="5" y="206" fill="#4a9080"/><use href="#gE" x="13" y="206" fill="#4a9080"/><rect x="27" y="208" width="23" height="4" fill="#101212"/><use href="#g0" x="54" y="206" fill="#4a9890"/><use href="#g0" x="62" y="206" fill="#4a9890"/><rect x="76" y="208" width="34" height="4" fill="#101212"/><use href="#g0" x="115" y="206" fill="#4a9890"/><use href="#g0" x="123" y="206" fill="#4a9890"/><use href="#g0" x="133" y="206" fill="#4a9890"/><use href="#g0" x="141" y="206" fill="#4a9890"/><use href="#g0" x="149" y="206" fill="#4a9890"/><use href="#g0" x="157" y="206" fill="#4a9890"/><rect x="171" y="208" width="22" height="4" fill="#101212"/><use href="#g0" x="199" y="206" fill="#4a9890"/><use href="#g0" x="207" y="206" fill="#4a9890"/><rect x="219" y="208" width="35" height="4" fill="#101212"/><use href="#g0" x="258" y="206" fill="#4a9890"/><use href="#g3" x="5" y="218" fill="#4a9080"/><use href="#gF" x="13" y="218" fill="#4a9080"/><rect x="27" y="220" width="23" height="4" fill="#101212"/><use href="#g0" x="54" y="218" fill="#4a9890"/><use href="#g0" x="62" y="218" fill="#4a9890"/><rect x="76" y="220" width="34" height="4" fill="#101212"/><use href="#g0" x="115" y="218" fill="#4a9890"/><use href="#g0" x="123" y="218" fill="#4a9890"/><use href="#g0" x="133" y="218" fill="#4a9890"/><use href="#g0" x="141" y="218" fill="#4a9890"/><use href="#g0" x="149" y="218" fill="#4a9890"/><use href="#g0" x="157" y="218" fill="#4a9890"/><rect x="171" y="220" width="22" height="4" fill="#101212"/><use href="#g0" x="199" y="218" fill="#4a9890"/><use href="#g0" x="207" y="218" fill="#4a9890"/><use href="#g0" x="219" y="218" fill="#4a9890"/><use href="#g0" x="227" y="218" fill="#4a9890"/><rect x="239" y="220" width="15" height="4" fill="#101212"/><use href="#g0" x="258" y="218" fill="#4a9890"/></svg>
<div class="a" style="left:26px;top:270px;width:2px;height:395px;background:#a8b0bc"></div>
<div class="a" style="left:170px;top:270px;width:3px;height:395px;background:#a8b0bc"></div>
<div class="a" style="left:5px;top:675px;width:17px;height:18px;background:#8698ac;box-sizing:border-box;border-top:1px solid #c4d0dc;border-left:1px solid #c4d0dc;border-bottom:1px solid #1a2230;border-right:1px solid #1a2230;border-bottom:2px solid #1a2230;border-right:2px solid #1a2230"></div>
<div class="a" style="left:28px;top:675px;width:48px;height:18px;background:#8fa0b4;box-sizing:border-box;border-top:1px solid #1a2230;border-left:1px solid #1a2230;border-bottom:1px solid #c4d0dc;border-right:1px solid #c4d0dc;border-top:2px solid #1a2230;border-left:2px solid #1a2230"></div>
<div class="t" style="left:38px;top:677px;font-size:12px;color:#000;letter-spacing:-0.5px;line-height:14px">Follow</div>
<div class="a" style="left:80px;top:675px;width:12px;height:15px;background:#8698ac;box-sizing:border-box;border-top:1px solid #c4d0dc;border-left:1px solid #c4d0dc;border-bottom:1px solid #1a2230;border-right:1px solid #1a2230;border-bottom:1px solid #1a2230;border-right:1px solid #1a2230"></div>
<div class="a" style="left:84px;top:679px;width:0;height:0;border-top:3px solid transparent;border-bottom:3px solid transparent;border-right:3px solid #111"></div>
<div class="a" style="left:93px;top:675px;width:13px;height:15px;background:#8698ac;box-sizing:border-box;border-top:1px solid #c4d0dc;border-left:1px solid #c4d0dc;border-bottom:1px solid #1a2230;border-right:1px solid #1a2230;border-bottom:1px solid #1a2230;border-right:1px solid #1a2230"></div>
<div class="a" style="left:106px;top:675px;width:160px;height:15px;background:#c0cad6"></div>
<div class="a" style="left:266px;top:221px;width:757px;height:1px;background:#c4d0dc"></div>
<div class="a" style="left:266px;top:221px;width:1px;height:475px;background:#c4d0dc"></div>
<div class="a" style="left:268px;top:222px;width:752px;height:474px;background:#8698ac"></div>
<div class="a" style="left:270px;top:224px;width:746px;height:14px;background:#56668a"></div>
<div class="t" style="left:272px;top:225px;font-size:12px;color:#fff;letter-spacing:-0.5px;line-height:14px">Automation</div>
<div class="a" style="left:1002px;top:225px;width:13px;height:12px;background:#98a4b8;box-sizing:border-box;border-top:1px solid #c4d0dc;border-left:1px solid #c4d0dc;border-bottom:1px solid #1a2230;border-right:1px solid #1a2230;border-bottom:1px solid #000;border-right:1px solid #000"></div>
<svg class="a" style="left:1005px;top:227px" width="8" height="7"><path d="M1 0.5 L7 6.5 M7 0.5 L1 6.5" stroke="#000" stroke-width="1.5"/></svg>
<div class="t" style="left:276px;top:242px;font-size:12px;color:#000;letter-spacing:-0.5px;line-height:14px">Envelope</div>
<div class="a" style="left:272px;top:262px;width:51px;height:13px;background:#000;box-sizing:border-box;border-bottom:1px solid #c4d0dc;border-right:1px solid #c4d0dc"></div>
<svg class="a" style="left:272px;top:262px" width="50" height="12"><use href="#gM" x="3.0" y="3" fill="#307062"/><use href="#gA" x="10.7" y="3" fill="#307062"/><use href="#gS" x="18.4" y="3" fill="#307062"/><use href="#gT" x="26.1" y="3" fill="#307062"/><use href="#gE" x="33.8" y="3" fill="#307062"/><use href="#gR" x="41.5" y="3" fill="#307062"/></svg>
<div class="a" style="left:325px;top:262px;width:21px;height:13px;background:#000;box-sizing:border-box;border-bottom:1px solid #c4d0dc;border-right:1px solid #c4d0dc"></div>
<svg class="a" style="left:325px;top:262px" width="20" height="12"><use href="#g0" transform="translate(2.0 3) scale(1.08 1)" fill="#58d0c8"/><use href="#g0" transform="translate(10.5 3) scale(1.08 1)" fill="#58d0c8"/></svg>
<div class="a" style="left:349px;top:262px;width:21px;height:13px;background:#000;box-sizing:border-box;border-bottom:1px solid #c4d0dc;border-right:1px solid #c4d0dc"></div>
<svg class="a" style="left:349px;top:262px" width="20" height="12"><use href="#g0" transform="translate(2.0 3) scale(1.08 1)" fill="#33786a"/><use href="#g1" transform="translate(10.5 3) scale(1.08 1)" fill="#33786a"/></svg>
<div class="a" style="left:373px;top:262px;width:21px;height:13px;background:#000;box-sizing:border-box;border-bottom:1px solid #c4d0dc;border-right:1px solid #c4d0dc"></div>
<svg class="a" style="left:373px;top:262px" width="20" height="12"><use href="#g0" transform="translate(2.0 3) scale(1.08 1)" fill="#33786a"/><use href="#g2" transform="translate(10.5 3) scale(1.08 1)" fill="#33786a"/></svg>
<div class="a" style="left:397px;top:262px;width:21px;height:13px;background:#000;box-sizing:border-box;border-bottom:1px solid #c4d0dc;border-right:1px solid #c4d0dc"></div>
<svg class="a" style="left:397px;top:262px" width="20" height="12"><use href="#g0" transform="translate(2.0 3) scale(1.08 1)" fill="#33786a"/><use href="#g3" transform="translate(10.5 3) scale(1.08 1)" fill="#33786a"/></svg>
<div class="a" style="left:421px;top:262px;width:21px;height:13px;background:#000;box-sizing:border-box;border-bottom:1px solid #c4d0dc;border-right:1px solid #c4d0dc"></div>
<svg class="a" style="left:421px;top:262px" width="20" height="12"><use href="#g0" transform="translate(2.0 3) scale(1.08 1)" fill="#33786a"/><use href="#g4" transform="translate(10.5 3) scale(1.08 1)" fill="#33786a"/></svg>
<div class="a" style="left:445px;top:262px;width:21px;height:13px;background:#000;box-sizing:border-box;border-bottom:1px solid #c4d0dc;border-right:1px solid #c4d0dc"></div>
<svg class="a" style="left:445px;top:262px" width="20" height="12"><use href="#g0" transform="translate(2.0 3) scale(1.08 1)" fill="#33786a"/><use href="#g5" transform="translate(10.5 3) scale(1.08 1)" fill="#33786a"/></svg>
<div class="a" style="left:469px;top:262px;width:21px;height:13px;background:#000;box-sizing:border-box;border-bottom:1px solid #c4d0dc;border-right:1px solid #c4d0dc"></div>
<svg class="a" style="left:469px;top:262px" width="20" height="12"><use href="#g0" transform="translate(2.0 3) scale(1.08 1)" fill="#33786a"/><use href="#g6" transform="translate(10.5 3) scale(1.08 1)" fill="#33786a"/></svg>
<div class="a" style="left:493px;top:262px;width:21px;height:13px;background:#000;box-sizing:border-box;border-bottom:1px solid #c4d0dc;border-right:1px solid #c4d0dc"></div>
<svg class="a" style="left:493px;top:262px" width="20" height="12"><use href="#g0" transform="translate(2.0 3) scale(1.08 1)" fill="#33786a"/><use href="#g7" transform="translate(10.5 3) scale(1.08 1)" fill="#33786a"/></svg>
<div class="a" style="left:517px;top:262px;width:21px;height:13px;background:#000;box-sizing:border-box;border-bottom:1px solid #c4d0dc;border-right:1px solid #c4d0dc"></div>
<svg class="a" style="left:517px;top:262px" width="20" height="12"><use href="#g0" transform="translate(2.0 3) scale(1.08 1)" fill="#33786a"/><use href="#g8" transform="translate(10.5 3) scale(1.08 1)" fill="#33786a"/></svg>
<div class="a" style="left:541px;top:262px;width:21px;height:13px;background:#000;box-sizing:border-box;border-bottom:1px solid #c4d0dc;border-right:1px solid #c4d0dc"></div>
<svg class="a" style="left:541px;top:262px" width="20" height="12"><use href="#g0" transform="translate(2.0 3) scale(1.08 1)" fill="#33786a"/><use href="#g9" transform="translate(10.5 3) scale(1.08 1)" fill="#33786a"/></svg>
<div class="a" style="left:565px;top:262px;width:21px;height:13px;background:#000;box-sizing:border-box;border-bottom:1px solid #c4d0dc;border-right:1px solid #c4d0dc"></div>
<svg class="a" style="left:565px;top:262px" width="20" height="12"><use href="#g1" transform="translate(2.0 3) scale(1.08 1)" fill="#33786a"/><use href="#g0" transform="translate(10.5 3) scale(1.08 1)" fill="#33786a"/></svg>
<div class="a" style="left:589px;top:262px;width:21px;height:13px;background:#000;box-sizing:border-box;border-bottom:1px solid #c4d0dc;border-right:1px solid #c4d0dc"></div>
<svg class="a" style="left:589px;top:262px" width="20" height="12"><use href="#g1" transform="translate(2.0 3) scale(1.08 1)" fill="#33786a"/><use href="#g1" transform="translate(10.5 3) scale(1.08 1)" fill="#33786a"/></svg>
<div class="a" style="left:613px;top:262px;width:21px;height:13px;background:#000;box-sizing:border-box;border-bottom:1px solid #c4d0dc;border-right:1px solid #c4d0dc"></div>
<svg class="a" style="left:613px;top:262px" width="20" height="12"><use href="#g1" transform="translate(2.0 3) scale(1.08 1)" fill="#33786a"/><use href="#g2" transform="translate(10.5 3) scale(1.08 1)" fill="#33786a"/></svg>
<div class="a" style="left:637px;top:262px;width:21px;height:13px;background:#000;box-sizing:border-box;border-bottom:1px solid #c4d0dc;border-right:1px solid #c4d0dc"></div>
<svg class="a" style="left:637px;top:262px" width="20" height="12"><use href="#g1" transform="translate(2.0 3) scale(1.08 1)" fill="#33786a"/><use href="#g3" transform="translate(10.5 3) scale(1.08 1)" fill="#33786a"/></svg>
<div class="a" style="left:661px;top:262px;width:21px;height:13px;background:#000;box-sizing:border-box;border-bottom:1px solid #c4d0dc;border-right:1px solid #c4d0dc"></div>
<svg class="a" style="left:661px;top:262px" width="20" height="12"><use href="#g1" transform="translate(2.0 3) scale(1.08 1)" fill="#33786a"/><use href="#g4" transform="translate(10.5 3) scale(1.08 1)" fill="#33786a"/></svg>
<div class="a" style="left:685px;top:262px;width:21px;height:13px;background:#000;box-sizing:border-box;border-bottom:1px solid #c4d0dc;border-right:1px solid #c4d0dc"></div>
<svg class="a" style="left:685px;top:262px" width="20" height="12"><use href="#g1" transform="translate(2.0 3) scale(1.08 1)" fill="#33786a"/><use href="#g5" transform="translate(10.5 3) scale(1.08 1)" fill="#33786a"/></svg>
<div class="a" style="left:275px;top:284px;width:11px;height:11px;background:#fff;box-sizing:border-box;border-top:1px solid #1a2230;border-left:1px solid #1a2230"></div>
<svg class="a" style="left:276px;top:285px" width="10" height="10"><path d="M1.5 4.5 L4 7 L8.5 2" stroke="#000" stroke-width="1.8" fill="none"/></svg>
<div class="t" style="left:292px;top:284px;font-size:10px;color:#000;letter-spacing:-0.6px;line-height:12px">Enabled</div>
<div class="a" style="left:355px;top:284px;width:46px;height:14px;background:#fff;box-sizing:border-box;border-top:1px solid #1a2230;border-left:1px solid #1a2230;border-bottom:1px solid #c4d0dc;border-right:1px solid #c4d0dc"></div>
<div class="t" style="left:358px;top:285px;font-size:11px;color:#000;line-height:12px">100</div>
<div class="t" style="left:411px;top:285px;font-size:10px;color:#000;letter-spacing:-0.6px;line-height:12px">Line 61</div>
<div class="a" style="left:471px;top:284px;width:50px;height:14px;background:#96a6ba;box-sizing:border-box;border-top:1px solid #1a2230;border-left:1px solid #1a2230;border-bottom:1px solid #c4d0dc;border-right:1px solid #c4d0dc;border-top:2px solid #1a2230;border-left:2px solid #1a2230"></div>
<div class="t" style="left:476px;top:285px;font-size:10px;color:#000;letter-spacing:0px;line-height:12px">St. Delay</div>
<div class="a" style="left:270px;top:305px;width:742px;height:1px;background:#3a4658"></div>
<div class="a" style="left:270px;top:306px;width:742px;height:1px;background:#c4d0dc"></div>
<div class="a" style="left:274px;top:315px;width:127px;height:375px;background:#fff;box-sizing:border-box;border-top:2px solid #1a2230;border-left:2px solid #1a2230;border-bottom:1px solid #c4d0dc;border-right:1px solid #c4d0dc"></div>
<div class="a" style="left:276px;top:333px;width:124px;height:15px;background:#4e5a70"></div>
<div class="t" style="left:277px;top:317px;font-size:12px;color:#000;letter-spacing:-0.7px;line-height:14px">Volume</div>
<div class="t" style="left:277px;top:333px;font-size:12px;color:#fff;font-weight:bold;letter-spacing:-0.4px;line-height:14px">Instrument Cutoff</div>
<div class="t" style="left:277px;top:349px;font-size:12px;color:#000;letter-spacing:-0.7px;line-height:14px">Instrument Resonance</div>
<div class="t" style="left:277px;top:365px;font-size:12px;color:#000;letter-spacing:-0.7px;line-height:14px">Instrument Attack</div>
<div class="t" style="left:277px;top:381px;font-size:12px;color:#000;letter-spacing:-0.7px;line-height:14px">Instrument Decay</div>
<div class="a" style="left:400px;top:312px;width:7px;height:378px;background:#a0b0c4"></div>
<div class="a" style="left:407px;top:316px;width:605px;height:374px;background:#02020a;box-sizing:border-box;border-top:2px solid #1a2230;border-left:1px solid #1a2230;border-bottom:2px solid #c4d0dc;border-right:2px solid #c4d0dc"></div>
<svg class="a" style="left:0;top:0" width="1023" height="715"><rect x="410.0" y="319" width="1" height="369" fill="#56608a"/><rect x="419.0" y="319" width="1" height="369" fill="#3c4466"/><rect x="429.0" y="319" width="1" height="369" fill="#3c4466"/><rect x="438.0" y="319" width="1" height="369" fill="#3c4466"/><rect x="447.0" y="319" width="1" height="369" fill="#56608a"/><rect x="457.0" y="319" width="1" height="369" fill="#3c4466"/><rect x="466.0" y="319" width="1" height="369" fill="#3c4466"/><rect x="476.0" y="319" width="1" height="369" fill="#3c4466"/><rect x="485.0" y="319" width="1" height="369" fill="#56608a"/><rect x="494.0" y="319" width="1" height="369" fill="#3c4466"/><rect x="504.0" y="319" width="1" height="369" fill="#3c4466"/><rect x="513.0" y="319" width="1" height="369" fill="#3c4466"/><rect x="522.0" y="319" width="1" height="369" fill="#56608a"/><rect x="532.0" y="319" width="1" height="369" fill="#3c4466"/><rect x="541.0" y="319" width="1" height="369" fill="#3c4466"/><rect x="550.0" y="319" width="1" height="369" fill="#3c4466"/><rect x="560.0" y="319" width="1" height="369" fill="#56608a"/><rect x="569.0" y="319" width="1" height="369" fill="#3c4466"/><rect x="578.0" y="319" width="1" height="369" fill="#3c4466"/><rect x="588.0" y="319" width="1" height="369" fill="#3c4466"/><rect x="597.0" y="319" width="1" height="369" fill="#56608a"/><rect x="607.0" y="319" width="1" height="369" fill="#3c4466"/><rect x="616.0" y="319" width="1" height="369" fill="#3c4466"/><rect x="625.0" y="319" width="1" height="369" fill="#3c4466"/><rect x="635.0" y="319" width="1" height="369" fill="#56608a"/><rect x="644.0" y="319" width="1" height="369" fill="#3c4466"/><rect x="653.0" y="319" width="1" height="369" fill="#3c4466"/><rect x="663.0" y="319" width="1" height="369" fill="#3c4466"/><rect x="672.0" y="319" width="1" height="369" fill="#56608a"/><rect x="681.0" y="319" width="1" height="369" fill="#3c4466"/><rect x="691.0" y="319" width="1" height="369" fill="#3c4466"/><rect x="700.0" y="319" width="1" height="369" fill="#3c4466"/><rect x="710.0" y="319" width="1" height="369" fill="#56608a"/><rect x="719.0" y="319" width="1" height="369" fill="#3c4466"/><rect x="728.0" y="319" width="1" height="369" fill="#3c4466"/><rect x="738.0" y="319" width="1" height="369" fill="#3c4466"/><rect x="747.0" y="319" width="1" height="369" fill="#56608a"/><rect x="756.0" y="319" width="1" height="369" fill="#3c4466"/><rect x="766.0" y="319" width="1" height="369" fill="#3c4466"/><rect x="775.0" y="319" width="1" height="369" fill="#3c4466"/><rect x="784.0" y="319" width="1" height="369" fill="#56608a"/><rect x="794.0" y="319" width="1" height="369" fill="#3c4466"/><rect x="803.0" y="319" width="1" height="369" fill="#3c4466"/><rect x="812.0" y="319" width="1" height="369" fill="#3c4466"/><rect x="822.0" y="319" width="1" height="369" fill="#56608a"/><rect x="831.0" y="319" width="1" height="369" fill="#3c4466"/><rect x="841.0" y="319" width="1" height="369" fill="#3c4466"/><rect x="850.0" y="319" width="1" height="369" fill="#3c4466"/><rect x="859.0" y="319" width="1" height="369" fill="#56608a"/><rect x="869.0" y="319" width="1" height="369" fill="#3c4466"/><rect x="878.0" y="319" width="1" height="369" fill="#3c4466"/><rect x="887.0" y="319" width="1" height="369" fill="#3c4466"/><rect x="897.0" y="319" width="1" height="369" fill="#56608a"/><rect x="906.0" y="319" width="1" height="369" fill="#3c4466"/><rect x="915.0" y="319" width="1" height="369" fill="#3c4466"/><rect x="925.0" y="319" width="1" height="369" fill="#3c4466"/><rect x="934.0" y="319" width="1" height="369" fill="#56608a"/><rect x="944.0" y="319" width="1" height="369" fill="#3c4466"/><rect x="953.0" y="319" width="1" height="369" fill="#3c4466"/><rect x="962.0" y="319" width="1" height="369" fill="#3c4466"/><rect x="972.0" y="319" width="1" height="369" fill="#56608a"/><rect x="981.0" y="319" width="1" height="369" fill="#d8d0c0"/><rect x="990.0" y="319" width="1" height="369" fill="#3c4466"/><rect x="1000.0" y="319" width="1" height="369" fill="#3c4466"/><polyline fill="none" stroke="#6a9aa0" stroke-width="1" points="410,686 522,649 634,641 765,572 821,515 840,462 849,515 887,593 924,636 962,640 1009,678"/><rect x="408" y="684" width="4" height="4" fill="#fff"/><rect x="520" y="647" width="5" height="5" fill="#fff"/><rect x="521" y="648" width="3" height="3" fill="#000"/><rect x="632" y="639" width="5" height="5" fill="#fff"/><rect x="633" y="640" width="3" height="3" fill="#000"/><rect x="763" y="570" width="5" height="5" fill="#fff"/><rect x="764" y="571" width="3" height="3" fill="#000"/><rect x="819" y="513" width="5" height="5" fill="#fff"/><rect x="820" y="514" width="3" height="3" fill="#000"/><rect x="838" y="460" width="5" height="5" fill="#fff"/><rect x="839" y="461" width="3" height="3" fill="#000"/><rect x="847" y="513" width="5" height="5" fill="#fff"/><rect x="848" y="514" width="3" height="3" fill="#000"/><rect x="885" y="591" width="5" height="5" fill="#fff"/><rect x="886" y="592" width="3" height="3" fill="#000"/><rect x="922" y="634" width="5" height="5" fill="#fff"/><rect x="923" y="635" width="3" height="3" fill="#000"/><rect x="960" y="638" width="5" height="5" fill="#fff"/><rect x="961" y="639" width="3" height="3" fill="#000"/><rect x="1007" y="676" width="5" height="5" fill="#fff"/><rect x="1008" y="677" width="3" height="3" fill="#000"/></svg>
<div class="a" style="left:268px;top:695px;width:752px;height:1px;background:#1a2232"></div>
<div class="a" style="left:1019px;top:220px;width:2px;height:476px;background:#1a2232"></div>
<div class="a" style="left:1021px;top:220px;width:2px;height:476px;background:#a8b4c4"></div>
<div class="a" style="left:0px;top:696px;width:1023px;height:19px;background:#8698ac"></div>
<div class="a" style="left:0px;top:696px;width:1023px;height:1px;background:#2a3444"></div>
<div class="a" style="left:250px;top:697px;width:1px;height:17px;background:#5a6a80"></div>
<div class="a" style="left:251px;top:697px;width:1px;height:17px;background:#c0ccd8"></div>
<div class="a" style="left:331px;top:697px;width:1px;height:17px;background:#5a6a80"></div>
<div class="a" style="left:332px;top:697px;width:1px;height:17px;background:#c0ccd8"></div>
<div class="a" style="left:395px;top:697px;width:1px;height:17px;background:#5a6a80"></div>
<div class="a" style="left:396px;top:697px;width:1px;height:17px;background:#c0ccd8"></div>
<div class="t" style="left:3px;top:699px;font-size:12px;color:#000;letter-spacing:-0.5px;line-height:14px">Ready</div>
<div class="t" style="left:254px;top:699px;font-size:12px;color:#000;letter-spacing:-0.5px;line-height:14px">Octave: 3-4</div>
<div class="t" style="left:334px;top:699px;font-size:12px;color:#000;letter-spacing:-0.5px;line-height:14px">Add: 1</div>
<div class="a" style="left:0px;top:713px;width:1023px;height:2px;background:#d0d8e0"></div>
</body></html>
